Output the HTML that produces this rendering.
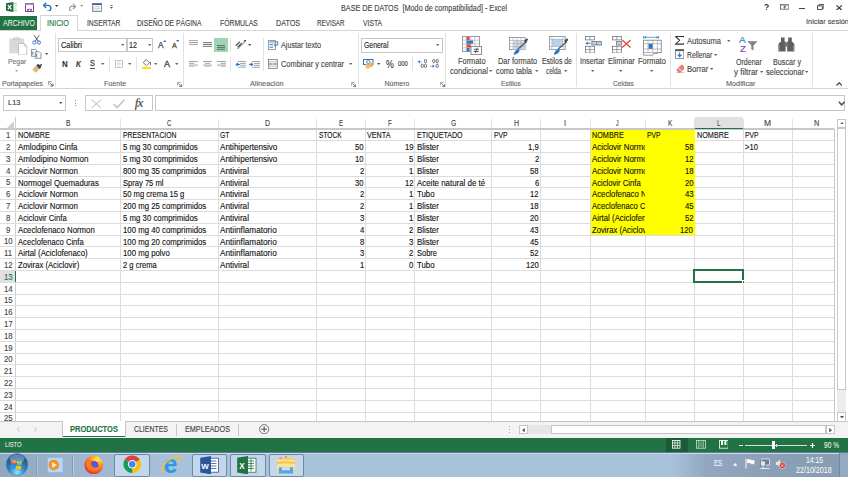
<!DOCTYPE html>
<html><head><meta charset="utf-8"><style>
html,body{margin:0;padding:0;width:848px;height:477px;overflow:hidden;background:#fff}
body{position:relative;font-family:"Liberation Sans",sans-serif}
div,svg{position:absolute}
</style></head><body>
<div style="left:0px;top:0px;width:848px;height:31px;background:#fff"></div>
<div style="left:340.5px;top:2.4px;line-height:12px;font-size:8.3px;color:#444;white-space:pre;transform:scaleX(0.871);transform-origin:0 50%;-webkit-text-stroke:0.12px #444;">BASE DE DATOS  [Modo de compatibilidad] - Excel</div>
<div style="left:0px;top:15.6px;width:36.6px;height:15.2px;background:#217346"></div>
<div style="left:2.6px;top:17.5px;line-height:12px;font-size:8.2px;color:#fff;white-space:pre;transform:scaleX(0.853);transform-origin:0 50%;">ARCHIVO</div>
<div style="left:0px;top:30.1px;width:848px;height:1px;background:#d5d5d5"></div>
<div style="left:39.6px;top:15.3px;width:38.1px;height:15.9px;background:#fff;border:1px solid #d5d5d5;border-bottom:none;box-sizing:border-box"></div>
<div style="left:47px;top:17.5px;line-height:12px;font-size:8.2px;color:#217346;white-space:pre;transform:scaleX(0.877);transform-origin:0 50%;-webkit-text-stroke:0.12px #217346;">INICIO</div>
<div style="left:86.6px;top:17.5px;line-height:12px;font-size:8.2px;color:#444;white-space:pre;transform:scaleX(0.821);transform-origin:0 50%;-webkit-text-stroke:0.12px #444;">INSERTAR</div>
<div style="left:137.2px;top:17.5px;line-height:12px;font-size:8.2px;color:#444;white-space:pre;transform:scaleX(0.824);transform-origin:0 50%;-webkit-text-stroke:0.12px #444;">DISEÑO DE PÁGINA</div>
<div style="left:220px;top:17.5px;line-height:12px;font-size:8.2px;color:#444;white-space:pre;transform:scaleX(0.833);transform-origin:0 50%;-webkit-text-stroke:0.12px #444;">FÓRMULAS</div>
<div style="left:275.8px;top:17.5px;line-height:12px;font-size:8.2px;color:#444;white-space:pre;transform:scaleX(0.877);transform-origin:0 50%;-webkit-text-stroke:0.12px #444;">DATOS</div>
<div style="left:317.4px;top:17.5px;line-height:12px;font-size:8.2px;color:#444;white-space:pre;transform:scaleX(0.767);transform-origin:0 50%;-webkit-text-stroke:0.12px #444;">REVISAR</div>
<div style="left:362.6px;top:17.5px;line-height:12px;font-size:8.2px;color:#444;white-space:pre;transform:scaleX(0.826);transform-origin:0 50%;-webkit-text-stroke:0.12px #444;">VISTA</div>
<div style="left:805.8px;top:15.9px;line-height:12px;font-size:8px;color:#444;white-space:pre;transform:scaleX(0.920);transform-origin:0 50%;-webkit-text-stroke:0.12px #444;">Iniciar sesión</div>
<div style="left:0px;top:87.8px;width:848px;height:1px;background:#d5d5d5"></div>
<div style="left:55.1px;top:33px;width:1px;height:54px;background:#e1e1e1"></div>
<div style="left:183.3px;top:33px;width:1px;height:54px;background:#e1e1e1"></div>
<div style="left:358px;top:33px;width:1px;height:54px;background:#e1e1e1"></div>
<div style="left:445.1px;top:33px;width:1px;height:54px;background:#e1e1e1"></div>
<div style="left:576px;top:33px;width:1px;height:54px;background:#e1e1e1"></div>
<div style="left:670.3px;top:33px;width:1px;height:54px;background:#e1e1e1"></div>
<div style="left:811.5px;top:33px;width:1px;height:54px;background:#e1e1e1"></div>
<div style="left:2px;top:77.5px;line-height:12px;font-size:7px;color:#666;white-space:pre;transform:scaleX(0.994);transform-origin:0 50%;-webkit-text-stroke:0.12px #666;">Portapapeles</div>
<div style="left:103.8px;top:77.5px;line-height:12px;font-size:7px;color:#666;white-space:pre;transform:scaleX(1.015);transform-origin:0 50%;-webkit-text-stroke:0.12px #666;">Fuente</div>
<div style="left:249.5px;top:77.5px;line-height:12px;font-size:7px;color:#666;white-space:pre;transform:scaleX(1.038);transform-origin:0 50%;-webkit-text-stroke:0.12px #666;">Alineación</div>
<div style="left:384.5px;top:77.5px;line-height:12px;font-size:7px;color:#666;white-space:pre;-webkit-text-stroke:0.12px #666;">Número</div>
<div style="left:500.8px;top:77.5px;line-height:12px;font-size:7px;color:#666;white-space:pre;transform:scaleX(0.969);transform-origin:0 50%;-webkit-text-stroke:0.12px #666;">Estilos</div>
<div style="left:613px;top:77.5px;line-height:12px;font-size:7px;color:#666;white-space:pre;transform:scaleX(0.955);transform-origin:0 50%;-webkit-text-stroke:0.12px #666;">Celdas</div>
<div style="left:726px;top:77.5px;line-height:12px;font-size:7px;color:#666;white-space:pre;transform:scaleX(1.038);transform-origin:0 50%;-webkit-text-stroke:0.12px #666;">Modificar</div>
<div style="left:7.8px;top:55.6px;line-height:12px;font-size:7px;color:#777;white-space:pre;transform:scaleX(0.974);transform-origin:0 50%;-webkit-text-stroke:0.12px #777;">Pegar</div>
<div style="left:58.1px;top:38.4px;width:69.3px;height:13.8px;border:1px solid #c6c6c6;box-sizing:border-box;background:#fff"></div>
<div style="left:126.9px;top:38.4px;width:26.6px;height:13.8px;border:1px solid #c6c6c6;box-sizing:border-box;background:#fff"></div>
<div style="left:60.5px;top:39.3px;line-height:12px;font-size:8.4px;color:#222;white-space:pre;transform:scaleX(0.883);transform-origin:0 50%;-webkit-text-stroke:0.12px #222;">Calibri</div>
<div style="left:129px;top:39.3px;line-height:12px;font-size:8.4px;color:#222;white-space:pre;transform:scaleX(0.858);transform-origin:0 50%;-webkit-text-stroke:0.12px #222;">12</div>
<svg style="left:120.75px;top:43.95px" width="3.5" height="2.1" viewBox="0 0 3.5 2.1"><path d="M0 0 L3.5 0 L1.75 1.93 Z" fill="#666"/></svg>
<svg style="left:147.55px;top:43.95px" width="3.5" height="2.1" viewBox="0 0 3.5 2.1"><path d="M0 0 L3.5 0 L1.75 1.93 Z" fill="#666"/></svg>
<div style="left:280.5px;top:39px;line-height:12px;font-size:8.3px;color:#444;white-space:pre;transform:scaleX(0.867);transform-origin:0 50%;-webkit-text-stroke:0.12px #444;">Ajustar texto</div>
<div style="left:280.5px;top:58px;line-height:12px;font-size:8.3px;color:#444;white-space:pre;transform:scaleX(0.893);transform-origin:0 50%;-webkit-text-stroke:0.12px #444;">Combinar y centrar</div>
<svg style="left:349.25px;top:62.95px" width="3.5" height="2.1" viewBox="0 0 3.5 2.1"><path d="M0 0 L3.5 0 L1.75 1.93 Z" fill="#666"/></svg>
<div style="left:361px;top:38px;width:81.6px;height:14.5px;border:1px solid #c6c6c6;box-sizing:border-box;background:#fff"></div>
<div style="left:363.5px;top:39.3px;line-height:12px;font-size:8.4px;color:#222;white-space:pre;transform:scaleX(0.819);transform-origin:0 50%;-webkit-text-stroke:0.12px #222;">General</div>
<svg style="left:435.75px;top:44.25px" width="3.5" height="2.1" viewBox="0 0 3.5 2.1"><path d="M0 0 L3.5 0 L1.75 1.93 Z" fill="#666"/></svg>
<div style="left:457.5px;top:55.3px;line-height:12px;font-size:8.3px;color:#444;white-space:pre;transform:scaleX(0.891);transform-origin:0 50%;-webkit-text-stroke:0.12px #444;">Formato</div>
<div style="left:449.8px;top:65.3px;line-height:12px;font-size:8.3px;color:#444;white-space:pre;transform:scaleX(0.911);transform-origin:0 50%;-webkit-text-stroke:0.12px #444;">condicional</div>
<svg style="left:489.05px;top:70.45px" width="3.5" height="2.1" viewBox="0 0 3.5 2.1"><path d="M0 0 L3.5 0 L1.75 1.93 Z" fill="#666"/></svg>
<div style="left:497.5px;top:55.3px;line-height:12px;font-size:8.3px;color:#444;white-space:pre;transform:scaleX(0.892);transform-origin:0 50%;-webkit-text-stroke:0.12px #444;">Dar formato</div>
<div style="left:496px;top:65.3px;line-height:12px;font-size:8.3px;color:#444;white-space:pre;transform:scaleX(0.885);transform-origin:0 50%;-webkit-text-stroke:0.12px #444;">como tabla</div>
<svg style="left:535.25px;top:70.45px" width="3.5" height="2.1" viewBox="0 0 3.5 2.1"><path d="M0 0 L3.5 0 L1.75 1.93 Z" fill="#666"/></svg>
<div style="left:541.5px;top:55.3px;line-height:12px;font-size:8.3px;color:#444;white-space:pre;transform:scaleX(0.833);transform-origin:0 50%;-webkit-text-stroke:0.12px #444;">Estilos de</div>
<div style="left:546px;top:65.3px;line-height:12px;font-size:8.3px;color:#444;white-space:pre;transform:scaleX(0.756);transform-origin:0 50%;-webkit-text-stroke:0.12px #444;">celda</div>
<svg style="left:564.25px;top:70.45px" width="3.5" height="2.1" viewBox="0 0 3.5 2.1"><path d="M0 0 L3.5 0 L1.75 1.93 Z" fill="#666"/></svg>
<div style="left:580.4px;top:55.3px;line-height:12px;font-size:8.3px;color:#444;white-space:pre;transform:scaleX(0.874);transform-origin:0 50%;-webkit-text-stroke:0.12px #444;">Insertar</div>
<svg style="left:590.75px;top:70.45px" width="3.5" height="2.1" viewBox="0 0 3.5 2.1"><path d="M0 0 L3.5 0 L1.75 1.93 Z" fill="#666"/></svg>
<div style="left:607.7px;top:55.3px;line-height:12px;font-size:8.3px;color:#444;white-space:pre;transform:scaleX(0.894);transform-origin:0 50%;-webkit-text-stroke:0.12px #444;">Eliminar</div>
<svg style="left:619.25px;top:70.45px" width="3.5" height="2.1" viewBox="0 0 3.5 2.1"><path d="M0 0 L3.5 0 L1.75 1.93 Z" fill="#666"/></svg>
<div style="left:637.5px;top:55.3px;line-height:12px;font-size:8.3px;color:#444;white-space:pre;transform:scaleX(0.900);transform-origin:0 50%;-webkit-text-stroke:0.12px #444;">Formato</div>
<svg style="left:649.75px;top:70.45px" width="3.5" height="2.1" viewBox="0 0 3.5 2.1"><path d="M0 0 L3.5 0 L1.75 1.93 Z" fill="#666"/></svg>
<div style="left:686.7px;top:34.7px;line-height:12px;font-size:8.3px;color:#444;white-space:pre;transform:scaleX(0.908);transform-origin:0 50%;-webkit-text-stroke:0.12px #444;">Autosuma</div>
<svg style="left:726.75px;top:39.65px" width="3.5" height="2.1" viewBox="0 0 3.5 2.1"><path d="M0 0 L3.5 0 L1.75 1.93 Z" fill="#666"/></svg>
<div style="left:686.7px;top:49px;line-height:12px;font-size:8.3px;color:#444;white-space:pre;transform:scaleX(0.819);transform-origin:0 50%;-webkit-text-stroke:0.12px #444;">Rellenar</div>
<svg style="left:714.25px;top:53.95px" width="3.5" height="2.1" viewBox="0 0 3.5 2.1"><path d="M0 0 L3.5 0 L1.75 1.93 Z" fill="#666"/></svg>
<div style="left:686.7px;top:62.8px;line-height:12px;font-size:8.3px;color:#444;white-space:pre;transform:scaleX(0.923);transform-origin:0 50%;-webkit-text-stroke:0.12px #444;">Borrar</div>
<svg style="left:709.85px;top:67.75px" width="3.5" height="2.1" viewBox="0 0 3.5 2.1"><path d="M0 0 L3.5 0 L1.75 1.93 Z" fill="#666"/></svg>
<div style="left:735.5px;top:55.5px;line-height:12px;font-size:8.3px;color:#444;white-space:pre;transform:scaleX(0.850);transform-origin:0 50%;-webkit-text-stroke:0.12px #444;">Ordenar</div>
<div style="left:734px;top:66px;line-height:12px;font-size:8.3px;color:#444;white-space:pre;transform:scaleX(0.964);transform-origin:0 50%;-webkit-text-stroke:0.12px #444;">y filtrar</div>
<svg style="left:759.75px;top:70.95px" width="3.5" height="2.1" viewBox="0 0 3.5 2.1"><path d="M0 0 L3.5 0 L1.75 1.93 Z" fill="#666"/></svg>
<div style="left:772.7px;top:55.5px;line-height:12px;font-size:8.3px;color:#444;white-space:pre;transform:scaleX(0.867);transform-origin:0 50%;-webkit-text-stroke:0.12px #444;">Buscar y</div>
<div style="left:765.7px;top:66px;line-height:12px;font-size:8.3px;color:#444;white-space:pre;transform:scaleX(0.910);transform-origin:0 50%;-webkit-text-stroke:0.12px #444;">seleccionar</div>
<svg style="left:804.75px;top:70.95px" width="3.5" height="2.1" viewBox="0 0 3.5 2.1"><path d="M0 0 L3.5 0 L1.75 1.93 Z" fill="#666"/></svg>
<div style="left:3px;top:95.3px;width:63px;height:15.7px;border:1px solid #c6c6c6;box-sizing:border-box;background:#fff"></div>
<div style="left:7.5px;top:97.4px;line-height:12px;font-size:7.6px;color:#333;white-space:pre;transform:scaleX(0.977);transform-origin:0 50%;-webkit-text-stroke:0.12px #333;">L13</div>
<svg style="left:58.65px;top:101.75px" width="3.5" height="2.1" viewBox="0 0 3.5 2.1"><path d="M0 0 L3.5 0 L1.75 1.93 Z" fill="#555"/></svg>
<div style="left:85px;top:95px;width:68px;height:16px;border:1px solid #c6c6c6;box-sizing:border-box;background:#fff"></div>
<div style="left:155.3px;top:95px;width:689.3px;height:16px;border:1px solid #c6c6c6;box-sizing:border-box;background:#fff"></div>
<div style="left:694.6px;top:117.4px;width:48.8px;height:11.5px;background:#e1e1e1"></div>
<div style="left:0px;top:270.5px;width:15.6px;height:11.8px;background:#e1e1e1"></div>
<div style="left:15.6px;top:140.2px;width:818.8px;height:1px;background:#dcdcdc"></div>
<div style="left:15.6px;top:152px;width:818.8px;height:1px;background:#dcdcdc"></div>
<div style="left:15.6px;top:163.8px;width:818.8px;height:1px;background:#dcdcdc"></div>
<div style="left:15.6px;top:175.6px;width:818.8px;height:1px;background:#dcdcdc"></div>
<div style="left:15.6px;top:187.4px;width:818.8px;height:1px;background:#dcdcdc"></div>
<div style="left:15.6px;top:199.2px;width:818.8px;height:1px;background:#dcdcdc"></div>
<div style="left:15.6px;top:211px;width:818.8px;height:1px;background:#dcdcdc"></div>
<div style="left:15.6px;top:222.8px;width:818.8px;height:1px;background:#dcdcdc"></div>
<div style="left:15.6px;top:234.6px;width:818.8px;height:1px;background:#dcdcdc"></div>
<div style="left:15.6px;top:246.4px;width:818.8px;height:1px;background:#dcdcdc"></div>
<div style="left:15.6px;top:258.2px;width:818.8px;height:1px;background:#dcdcdc"></div>
<div style="left:15.6px;top:270px;width:818.8px;height:1px;background:#dcdcdc"></div>
<div style="left:15.6px;top:281.8px;width:818.8px;height:1px;background:#dcdcdc"></div>
<div style="left:15.6px;top:293.6px;width:818.8px;height:1px;background:#dcdcdc"></div>
<div style="left:15.6px;top:305.4px;width:818.8px;height:1px;background:#dcdcdc"></div>
<div style="left:15.6px;top:317.2px;width:818.8px;height:1px;background:#dcdcdc"></div>
<div style="left:15.6px;top:329px;width:818.8px;height:1px;background:#dcdcdc"></div>
<div style="left:15.6px;top:340.8px;width:818.8px;height:1px;background:#dcdcdc"></div>
<div style="left:15.6px;top:352.6px;width:818.8px;height:1px;background:#dcdcdc"></div>
<div style="left:15.6px;top:364.4px;width:818.8px;height:1px;background:#dcdcdc"></div>
<div style="left:15.6px;top:376.2px;width:818.8px;height:1px;background:#dcdcdc"></div>
<div style="left:15.6px;top:388px;width:818.8px;height:1px;background:#dcdcdc"></div>
<div style="left:15.6px;top:399.8px;width:818.8px;height:1px;background:#dcdcdc"></div>
<div style="left:15.6px;top:411.6px;width:818.8px;height:1px;background:#dcdcdc"></div>
<div style="left:120px;top:128.9px;width:1px;height:292.4px;background:#dcdcdc"></div>
<div style="left:120px;top:118.9px;width:1px;height:10px;background:#e2e2e2"></div>
<div style="left:217.9px;top:128.9px;width:1px;height:292.4px;background:#dcdcdc"></div>
<div style="left:217.9px;top:118.9px;width:1px;height:10px;background:#e2e2e2"></div>
<div style="left:316.3px;top:128.9px;width:1px;height:292.4px;background:#dcdcdc"></div>
<div style="left:316.3px;top:118.9px;width:1px;height:10px;background:#e2e2e2"></div>
<div style="left:364.8px;top:128.9px;width:1px;height:292.4px;background:#dcdcdc"></div>
<div style="left:364.8px;top:118.9px;width:1px;height:10px;background:#e2e2e2"></div>
<div style="left:414.1px;top:128.9px;width:1px;height:292.4px;background:#dcdcdc"></div>
<div style="left:414.1px;top:118.9px;width:1px;height:10px;background:#e2e2e2"></div>
<div style="left:491.3px;top:128.9px;width:1px;height:292.4px;background:#dcdcdc"></div>
<div style="left:491.3px;top:118.9px;width:1px;height:10px;background:#e2e2e2"></div>
<div style="left:539.9px;top:128.9px;width:1px;height:292.4px;background:#dcdcdc"></div>
<div style="left:539.9px;top:118.9px;width:1px;height:10px;background:#e2e2e2"></div>
<div style="left:589.7px;top:128.9px;width:1px;height:292.4px;background:#dcdcdc"></div>
<div style="left:589.7px;top:118.9px;width:1px;height:10px;background:#e2e2e2"></div>
<div style="left:644.8px;top:128.9px;width:1px;height:292.4px;background:#dcdcdc"></div>
<div style="left:644.8px;top:118.9px;width:1px;height:10px;background:#e2e2e2"></div>
<div style="left:694.1px;top:128.9px;width:1px;height:292.4px;background:#dcdcdc"></div>
<div style="left:694.1px;top:118.9px;width:1px;height:10px;background:#e2e2e2"></div>
<div style="left:742.9px;top:128.9px;width:1px;height:292.4px;background:#dcdcdc"></div>
<div style="left:742.9px;top:118.9px;width:1px;height:10px;background:#e2e2e2"></div>
<div style="left:791.9px;top:128.9px;width:1px;height:292.4px;background:#dcdcdc"></div>
<div style="left:791.9px;top:118.9px;width:1px;height:10px;background:#e2e2e2"></div>
<div style="left:590.5px;top:129.3px;width:104px;height:106.2px;background:#ffff00"></div>
<div style="left:0px;top:128.25px;width:834.4px;height:1.3px;background:#c8c8c8"></div>
<div style="left:15.1px;top:117.4px;width:1px;height:303.9px;background:#cfcfcf"></div>
<div style="left:833.9px;top:128.9px;width:1px;height:292.4px;background:#c6c6c6"></div>
<div style="left:0px;top:140.2px;width:15.6px;height:1px;background:#dcdcdc"></div>
<div style="left:0px;top:152px;width:15.6px;height:1px;background:#dcdcdc"></div>
<div style="left:0px;top:163.8px;width:15.6px;height:1px;background:#dcdcdc"></div>
<div style="left:0px;top:175.6px;width:15.6px;height:1px;background:#dcdcdc"></div>
<div style="left:0px;top:187.4px;width:15.6px;height:1px;background:#dcdcdc"></div>
<div style="left:0px;top:199.2px;width:15.6px;height:1px;background:#dcdcdc"></div>
<div style="left:0px;top:211px;width:15.6px;height:1px;background:#dcdcdc"></div>
<div style="left:0px;top:222.8px;width:15.6px;height:1px;background:#dcdcdc"></div>
<div style="left:0px;top:234.6px;width:15.6px;height:1px;background:#dcdcdc"></div>
<div style="left:0px;top:246.4px;width:15.6px;height:1px;background:#dcdcdc"></div>
<div style="left:0px;top:258.2px;width:15.6px;height:1px;background:#dcdcdc"></div>
<div style="left:0px;top:270px;width:15.6px;height:1px;background:#dcdcdc"></div>
<div style="left:0px;top:281.8px;width:15.6px;height:1px;background:#dcdcdc"></div>
<div style="left:0px;top:293.6px;width:15.6px;height:1px;background:#dcdcdc"></div>
<div style="left:0px;top:305.4px;width:15.6px;height:1px;background:#dcdcdc"></div>
<div style="left:0px;top:317.2px;width:15.6px;height:1px;background:#dcdcdc"></div>
<div style="left:0px;top:329px;width:15.6px;height:1px;background:#dcdcdc"></div>
<div style="left:0px;top:340.8px;width:15.6px;height:1px;background:#dcdcdc"></div>
<div style="left:0px;top:352.6px;width:15.6px;height:1px;background:#dcdcdc"></div>
<div style="left:0px;top:364.4px;width:15.6px;height:1px;background:#dcdcdc"></div>
<div style="left:0px;top:376.2px;width:15.6px;height:1px;background:#dcdcdc"></div>
<div style="left:0px;top:388px;width:15.6px;height:1px;background:#dcdcdc"></div>
<div style="left:0px;top:399.8px;width:15.6px;height:1px;background:#dcdcdc"></div>
<div style="left:0px;top:411.6px;width:15.6px;height:1px;background:#dcdcdc"></div>
<div style="left:694.6px;top:127.55px;width:48.8px;height:1.5px;background:#217346"></div>
<div style="left:14.55px;top:270.5px;width:1.5px;height:11.8px;background:#217346"></div>
<div style="left:65.8px;top:117.3px;line-height:12px;font-size:8.6px;color:#444;white-space:pre;transform:scaleX(0.782);transform-origin:0 50%;-webkit-text-stroke:0.12px #444;">B</div>
<div style="left:167.26px;top:117.3px;line-height:12px;font-size:8.6px;color:#444;white-space:pre;transform:scaleX(0.708);transform-origin:0 50%;-webkit-text-stroke:0.12px #444;">C</div>
<div style="left:265.07px;top:117.3px;line-height:12px;font-size:8.6px;color:#444;white-space:pre;transform:scaleX(0.817);transform-origin:0 50%;-webkit-text-stroke:0.12px #444;">D</div>
<div style="left:339.03px;top:117.3px;line-height:12px;font-size:8.6px;color:#444;white-space:pre;transform:scaleX(0.702);transform-origin:0 50%;-webkit-text-stroke:0.12px #444;">E</div>
<div style="left:388.06px;top:117.3px;line-height:12px;font-size:8.6px;color:#444;white-space:pre;transform:scaleX(0.722);transform-origin:0 50%;-webkit-text-stroke:0.12px #444;">F</div>
<div style="left:450.59px;top:117.3px;line-height:12px;font-size:8.6px;color:#444;white-space:pre;transform:scaleX(0.778);transform-origin:0 50%;-webkit-text-stroke:0.12px #444;">G</div>
<div style="left:513.54px;top:117.3px;line-height:12px;font-size:8.6px;color:#444;white-space:pre;transform:scaleX(0.828);transform-origin:0 50%;-webkit-text-stroke:0.12px #444;">H</div>
<div style="left:564.25px;top:117.3px;line-height:12px;font-size:8.6px;color:#444;white-space:pre;transform:scaleX(0.870);transform-origin:0 50%;-webkit-text-stroke:0.12px #444;">I</div>
<div style="left:616.43px;top:117.3px;line-height:12px;font-size:8.6px;color:#444;white-space:pre;transform:scaleX(0.612);transform-origin:0 50%;-webkit-text-stroke:0.12px #444;">J</div>
<div style="left:667.8px;top:117.3px;line-height:12px;font-size:8.6px;color:#444;white-space:pre;transform:scaleX(0.747);transform-origin:0 50%;-webkit-text-stroke:0.12px #444;">K</div>
<div style="left:717.25px;top:117.3px;line-height:12px;font-size:8.6px;color:#217346;white-space:pre;transform:scaleX(0.725);transform-origin:0 50%;-webkit-text-stroke:0.12px #217346;">L</div>
<div style="left:764.39px;top:117.3px;line-height:12px;font-size:8.6px;color:#444;white-space:pre;transform:scaleX(0.985);transform-origin:0 50%;-webkit-text-stroke:0.12px #444;">M</div>
<div style="left:814.35px;top:117.3px;line-height:12px;font-size:8.6px;color:#444;white-space:pre;transform:scaleX(0.857);transform-origin:0 50%;-webkit-text-stroke:0.12px #444;">N</div>
<svg style="left:7px;top:120.5px" width="7" height="7" viewBox="0 0 7 7"><path d="M7 0 L7 7 L0 7 Z" fill="#d0d0d0"/></svg>
<div style="left:6.01px;top:129.2px;line-height:12px;font-size:8.6px;color:#444;white-space:pre;transform:scaleX(0.910);transform-origin:0 50%;-webkit-text-stroke:0.12px #444;">1</div>
<div style="left:6.01px;top:141px;line-height:12px;font-size:8.6px;color:#444;white-space:pre;transform:scaleX(0.910);transform-origin:0 50%;-webkit-text-stroke:0.12px #444;">2</div>
<div style="left:6.01px;top:152.8px;line-height:12px;font-size:8.6px;color:#444;white-space:pre;transform:scaleX(0.910);transform-origin:0 50%;-webkit-text-stroke:0.12px #444;">3</div>
<div style="left:6.01px;top:164.6px;line-height:12px;font-size:8.6px;color:#444;white-space:pre;transform:scaleX(0.910);transform-origin:0 50%;-webkit-text-stroke:0.12px #444;">4</div>
<div style="left:6.01px;top:176.4px;line-height:12px;font-size:8.6px;color:#444;white-space:pre;transform:scaleX(0.910);transform-origin:0 50%;-webkit-text-stroke:0.12px #444;">5</div>
<div style="left:6.01px;top:188.2px;line-height:12px;font-size:8.6px;color:#444;white-space:pre;transform:scaleX(0.910);transform-origin:0 50%;-webkit-text-stroke:0.12px #444;">6</div>
<div style="left:6.01px;top:200px;line-height:12px;font-size:8.6px;color:#444;white-space:pre;transform:scaleX(0.910);transform-origin:0 50%;-webkit-text-stroke:0.12px #444;">7</div>
<div style="left:6.01px;top:211.8px;line-height:12px;font-size:8.6px;color:#444;white-space:pre;transform:scaleX(0.910);transform-origin:0 50%;-webkit-text-stroke:0.12px #444;">8</div>
<div style="left:6.01px;top:223.6px;line-height:12px;font-size:8.6px;color:#444;white-space:pre;transform:scaleX(0.910);transform-origin:0 50%;-webkit-text-stroke:0.12px #444;">9</div>
<div style="left:3.86px;top:235.4px;line-height:12px;font-size:8.6px;color:#444;white-space:pre;transform:scaleX(0.910);transform-origin:0 50%;-webkit-text-stroke:0.12px #444;">10</div>
<div style="left:4.13px;top:247.2px;line-height:12px;font-size:8.6px;color:#444;white-space:pre;transform:scaleX(0.910);transform-origin:0 50%;-webkit-text-stroke:0.12px #444;">11</div>
<div style="left:3.86px;top:259px;line-height:12px;font-size:8.6px;color:#444;white-space:pre;transform:scaleX(0.910);transform-origin:0 50%;-webkit-text-stroke:0.12px #444;">12</div>
<div style="left:3.86px;top:270.8px;line-height:12px;font-size:8.6px;color:#217346;white-space:pre;transform:scaleX(0.910);transform-origin:0 50%;-webkit-text-stroke:0.12px #217346;">13</div>
<div style="left:3.86px;top:282.6px;line-height:12px;font-size:8.6px;color:#444;white-space:pre;transform:scaleX(0.910);transform-origin:0 50%;-webkit-text-stroke:0.12px #444;">14</div>
<div style="left:3.86px;top:294.4px;line-height:12px;font-size:8.6px;color:#444;white-space:pre;transform:scaleX(0.910);transform-origin:0 50%;-webkit-text-stroke:0.12px #444;">15</div>
<div style="left:3.86px;top:306.2px;line-height:12px;font-size:8.6px;color:#444;white-space:pre;transform:scaleX(0.910);transform-origin:0 50%;-webkit-text-stroke:0.12px #444;">16</div>
<div style="left:3.86px;top:318px;line-height:12px;font-size:8.6px;color:#444;white-space:pre;transform:scaleX(0.910);transform-origin:0 50%;-webkit-text-stroke:0.12px #444;">17</div>
<div style="left:3.86px;top:329.8px;line-height:12px;font-size:8.6px;color:#444;white-space:pre;transform:scaleX(0.910);transform-origin:0 50%;-webkit-text-stroke:0.12px #444;">18</div>
<div style="left:3.86px;top:341.6px;line-height:12px;font-size:8.6px;color:#444;white-space:pre;transform:scaleX(0.910);transform-origin:0 50%;-webkit-text-stroke:0.12px #444;">19</div>
<div style="left:3.86px;top:353.4px;line-height:12px;font-size:8.6px;color:#444;white-space:pre;transform:scaleX(0.910);transform-origin:0 50%;-webkit-text-stroke:0.12px #444;">20</div>
<div style="left:3.86px;top:365.2px;line-height:12px;font-size:8.6px;color:#444;white-space:pre;transform:scaleX(0.910);transform-origin:0 50%;-webkit-text-stroke:0.12px #444;">21</div>
<div style="left:3.86px;top:377px;line-height:12px;font-size:8.6px;color:#444;white-space:pre;transform:scaleX(0.910);transform-origin:0 50%;-webkit-text-stroke:0.12px #444;">22</div>
<div style="left:3.86px;top:388.8px;line-height:12px;font-size:8.6px;color:#444;white-space:pre;transform:scaleX(0.910);transform-origin:0 50%;-webkit-text-stroke:0.12px #444;">23</div>
<div style="left:3.86px;top:400.6px;line-height:12px;font-size:8.6px;color:#444;white-space:pre;transform:scaleX(0.910);transform-origin:0 50%;-webkit-text-stroke:0.12px #444;">24</div>
<div style="left:3.86px;top:412.4px;line-height:12px;font-size:8.6px;color:#444;white-space:pre;transform:scaleX(0.910);transform-origin:0 50%;-webkit-text-stroke:0.12px #444;">25</div>
<div style="left:16.6px;top:128.9px;width:103.4px;height:11.8px;overflow:hidden"><div style="left:1.0px;top:0.5px;line-height:12px;font-size:8.6px;color:#111;white-space:pre;-webkit-text-stroke:0.12px #111;transform:scaleX(0.842);transform-origin:0 50%;">NOMBRE</div></div>
<div style="left:121.5px;top:128.9px;width:96.4px;height:11.8px;overflow:hidden"><div style="left:1.0px;top:0.5px;line-height:12px;font-size:8.6px;color:#111;white-space:pre;-webkit-text-stroke:0.12px #111;transform:scaleX(0.797);transform-origin:0 50%;">PRESENTACION</div></div>
<div style="left:219.4px;top:128.9px;width:96.9px;height:11.8px;overflow:hidden"><div style="left:1.0px;top:0.5px;line-height:12px;font-size:8.6px;color:#111;white-space:pre;-webkit-text-stroke:0.12px #111;transform:scaleX(0.796);transform-origin:0 50%;">GT</div></div>
<div style="left:317.8px;top:128.9px;width:47px;height:11.8px;overflow:hidden"><div style="left:1.0px;top:0.5px;line-height:12px;font-size:8.6px;color:#111;white-space:pre;-webkit-text-stroke:0.12px #111;transform:scaleX(0.768);transform-origin:0 50%;">STOCK</div></div>
<div style="left:366.3px;top:128.9px;width:47.8px;height:11.8px;overflow:hidden"><div style="left:1.0px;top:0.5px;line-height:12px;font-size:8.6px;color:#111;white-space:pre;-webkit-text-stroke:0.12px #111;transform:scaleX(0.839);transform-origin:0 50%;">VENTA</div></div>
<div style="left:415.6px;top:128.9px;width:75.7px;height:11.8px;overflow:hidden"><div style="left:1.0px;top:0.5px;line-height:12px;font-size:8.6px;color:#111;white-space:pre;-webkit-text-stroke:0.12px #111;transform:scaleX(0.826);transform-origin:0 50%;">ETIQUETADO</div></div>
<div style="left:492.8px;top:128.9px;width:47.1px;height:11.8px;overflow:hidden"><div style="left:1.0px;top:0.5px;line-height:12px;font-size:8.6px;color:#111;white-space:pre;-webkit-text-stroke:0.12px #111;transform:scaleX(0.791);transform-origin:0 50%;">PVP</div></div>
<div style="left:591.2px;top:128.9px;width:53.6px;height:11.8px;overflow:hidden"><div style="left:1.0px;top:0.5px;line-height:12px;font-size:8.6px;color:#111;white-space:pre;-webkit-text-stroke:0.12px #111;transform:scaleX(0.842);transform-origin:0 50%;">NOMBRE</div></div>
<div style="left:646.3px;top:128.9px;width:47.8px;height:11.8px;overflow:hidden"><div style="left:1.0px;top:0.5px;line-height:12px;font-size:8.6px;color:#111;white-space:pre;-webkit-text-stroke:0.12px #111;transform:scaleX(0.791);transform-origin:0 50%;">PVP</div></div>
<div style="left:695.6px;top:128.9px;width:47.3px;height:11.8px;overflow:hidden"><div style="left:1.0px;top:0.5px;line-height:12px;font-size:8.6px;color:#111;white-space:pre;-webkit-text-stroke:0.12px #111;transform:scaleX(0.842);transform-origin:0 50%;">NOMBRE</div></div>
<div style="left:744.4px;top:128.9px;width:47.5px;height:11.8px;overflow:hidden"><div style="left:1.0px;top:0.5px;line-height:12px;font-size:8.6px;color:#111;white-space:pre;-webkit-text-stroke:0.12px #111;transform:scaleX(0.791);transform-origin:0 50%;">PVP</div></div>
<div style="left:16.6px;top:140.7px;width:103.4px;height:11.8px;overflow:hidden"><div style="left:1.0px;top:0.5px;line-height:12px;font-size:8.6px;color:#111;white-space:pre;-webkit-text-stroke:0.12px #111;transform:scaleX(0.915);transform-origin:0 50%;">Amlodipino Cinfa</div></div>
<div style="left:121.5px;top:140.7px;width:96.4px;height:11.8px;overflow:hidden"><div style="left:1.0px;top:0.5px;line-height:12px;font-size:8.6px;color:#111;white-space:pre;-webkit-text-stroke:0.12px #111;transform:scaleX(0.909);transform-origin:0 50%;">5 mg 30 comprimidos</div></div>
<div style="left:219.4px;top:140.7px;width:96.9px;height:11.8px;overflow:hidden"><div style="left:1.0px;top:0.5px;line-height:12px;font-size:8.6px;color:#111;white-space:pre;-webkit-text-stroke:0.12px #111;transform:scaleX(0.938);transform-origin:0 50%;">Antihipertensivo</div></div>
<div style="left:355.28px;top:141.2px;line-height:12px;font-size:8.6px;color:#111;white-space:pre;-webkit-text-stroke:0.12px #111;transform:scaleX(0.901);transform-origin:0 50%;">50</div>
<div style="left:404.58px;top:141.2px;line-height:12px;font-size:8.6px;color:#111;white-space:pre;-webkit-text-stroke:0.12px #111;transform:scaleX(0.901);transform-origin:0 50%;">19</div>
<div style="left:415.6px;top:140.7px;width:75.7px;height:11.8px;overflow:hidden"><div style="left:1.0px;top:0.5px;line-height:12px;font-size:8.6px;color:#111;white-space:pre;-webkit-text-stroke:0.12px #111;transform:scaleX(0.916);transform-origin:0 50%;">Blister</div></div>
<div style="left:528.26px;top:141.2px;line-height:12px;font-size:8.6px;color:#111;white-space:pre;-webkit-text-stroke:0.12px #111;transform:scaleX(0.898);transform-origin:0 50%;">1,9</div>
<div style="left:591.2px;top:140.7px;width:53.6px;height:11.8px;overflow:hidden"><div style="left:1.0px;top:0.5px;line-height:12px;font-size:8.6px;color:#111;white-space:pre;-webkit-text-stroke:0.12px #111;transform:scaleX(0.921);transform-origin:0 50%;">Aciclovir Normon</div></div>
<div style="left:684.58px;top:141.2px;line-height:12px;font-size:8.6px;color:#111;white-space:pre;-webkit-text-stroke:0.12px #111;transform:scaleX(0.901);transform-origin:0 50%;">58</div>
<div style="left:744.4px;top:140.7px;width:47.5px;height:11.8px;overflow:hidden"><div style="left:1.0px;top:0.5px;line-height:12px;font-size:8.6px;color:#111;white-space:pre;-webkit-text-stroke:0.12px #111;transform:scaleX(0.886);transform-origin:0 50%;">>10</div></div>
<div style="left:16.6px;top:152.5px;width:103.4px;height:11.8px;overflow:hidden"><div style="left:1.0px;top:0.5px;line-height:12px;font-size:8.6px;color:#111;white-space:pre;-webkit-text-stroke:0.12px #111;transform:scaleX(0.934);transform-origin:0 50%;">Amlodipino Normon</div></div>
<div style="left:121.5px;top:152.5px;width:96.4px;height:11.8px;overflow:hidden"><div style="left:1.0px;top:0.5px;line-height:12px;font-size:8.6px;color:#111;white-space:pre;-webkit-text-stroke:0.12px #111;transform:scaleX(0.909);transform-origin:0 50%;">5 mg 30 comprimidos</div></div>
<div style="left:219.4px;top:152.5px;width:96.9px;height:11.8px;overflow:hidden"><div style="left:1.0px;top:0.5px;line-height:12px;font-size:8.6px;color:#111;white-space:pre;-webkit-text-stroke:0.12px #111;transform:scaleX(0.938);transform-origin:0 50%;">Antihipertensivo</div></div>
<div style="left:355.28px;top:153px;line-height:12px;font-size:8.6px;color:#111;white-space:pre;-webkit-text-stroke:0.12px #111;transform:scaleX(0.901);transform-origin:0 50%;">10</div>
<div style="left:408.89px;top:153px;line-height:12px;font-size:8.6px;color:#111;white-space:pre;-webkit-text-stroke:0.12px #111;transform:scaleX(0.901);transform-origin:0 50%;">5</div>
<div style="left:415.6px;top:152.5px;width:75.7px;height:11.8px;overflow:hidden"><div style="left:1.0px;top:0.5px;line-height:12px;font-size:8.6px;color:#111;white-space:pre;-webkit-text-stroke:0.12px #111;transform:scaleX(0.916);transform-origin:0 50%;">Blister</div></div>
<div style="left:534.69px;top:153px;line-height:12px;font-size:8.6px;color:#111;white-space:pre;-webkit-text-stroke:0.12px #111;transform:scaleX(0.901);transform-origin:0 50%;">2</div>
<div style="left:591.2px;top:152.5px;width:53.6px;height:11.8px;overflow:hidden"><div style="left:1.0px;top:0.5px;line-height:12px;font-size:8.6px;color:#111;white-space:pre;-webkit-text-stroke:0.12px #111;transform:scaleX(0.921);transform-origin:0 50%;">Aciclovir Normon</div></div>
<div style="left:684.58px;top:153px;line-height:12px;font-size:8.6px;color:#111;white-space:pre;-webkit-text-stroke:0.12px #111;transform:scaleX(0.901);transform-origin:0 50%;">12</div>
<div style="left:16.6px;top:164.3px;width:103.4px;height:11.8px;overflow:hidden"><div style="left:1.0px;top:0.5px;line-height:12px;font-size:8.6px;color:#111;white-space:pre;-webkit-text-stroke:0.12px #111;transform:scaleX(0.921);transform-origin:0 50%;">Aciclovir Normon</div></div>
<div style="left:121.5px;top:164.3px;width:96.4px;height:11.8px;overflow:hidden"><div style="left:1.0px;top:0.5px;line-height:12px;font-size:8.6px;color:#111;white-space:pre;-webkit-text-stroke:0.12px #111;transform:scaleX(0.908);transform-origin:0 50%;">800 mg 35 comprimidos</div></div>
<div style="left:219.4px;top:164.3px;width:96.9px;height:11.8px;overflow:hidden"><div style="left:1.0px;top:0.5px;line-height:12px;font-size:8.6px;color:#111;white-space:pre;-webkit-text-stroke:0.12px #111;transform:scaleX(0.947);transform-origin:0 50%;">Antiviral</div></div>
<div style="left:359.59px;top:164.8px;line-height:12px;font-size:8.6px;color:#111;white-space:pre;-webkit-text-stroke:0.12px #111;transform:scaleX(0.901);transform-origin:0 50%;">2</div>
<div style="left:408.89px;top:164.8px;line-height:12px;font-size:8.6px;color:#111;white-space:pre;-webkit-text-stroke:0.12px #111;transform:scaleX(0.901);transform-origin:0 50%;">1</div>
<div style="left:415.6px;top:164.3px;width:75.7px;height:11.8px;overflow:hidden"><div style="left:1.0px;top:0.5px;line-height:12px;font-size:8.6px;color:#111;white-space:pre;-webkit-text-stroke:0.12px #111;transform:scaleX(0.916);transform-origin:0 50%;">Blister</div></div>
<div style="left:530.38px;top:164.8px;line-height:12px;font-size:8.6px;color:#111;white-space:pre;-webkit-text-stroke:0.12px #111;transform:scaleX(0.901);transform-origin:0 50%;">58</div>
<div style="left:591.2px;top:164.3px;width:53.6px;height:11.8px;overflow:hidden"><div style="left:1.0px;top:0.5px;line-height:12px;font-size:8.6px;color:#111;white-space:pre;-webkit-text-stroke:0.12px #111;transform:scaleX(0.921);transform-origin:0 50%;">Aciclovir Normon</div></div>
<div style="left:684.58px;top:164.8px;line-height:12px;font-size:8.6px;color:#111;white-space:pre;-webkit-text-stroke:0.12px #111;transform:scaleX(0.901);transform-origin:0 50%;">18</div>
<div style="left:16.6px;top:176.1px;width:103.4px;height:11.8px;overflow:hidden"><div style="left:1.0px;top:0.5px;line-height:12px;font-size:8.6px;color:#111;white-space:pre;-webkit-text-stroke:0.12px #111;transform:scaleX(0.905);transform-origin:0 50%;">Normogel Quemaduras</div></div>
<div style="left:121.5px;top:176.1px;width:96.4px;height:11.8px;overflow:hidden"><div style="left:1.0px;top:0.5px;line-height:12px;font-size:8.6px;color:#111;white-space:pre;-webkit-text-stroke:0.12px #111;transform:scaleX(0.882);transform-origin:0 50%;">Spray 75 ml</div></div>
<div style="left:219.4px;top:176.1px;width:96.9px;height:11.8px;overflow:hidden"><div style="left:1.0px;top:0.5px;line-height:12px;font-size:8.6px;color:#111;white-space:pre;-webkit-text-stroke:0.12px #111;transform:scaleX(0.947);transform-origin:0 50%;">Antiviral</div></div>
<div style="left:355.28px;top:176.6px;line-height:12px;font-size:8.6px;color:#111;white-space:pre;-webkit-text-stroke:0.12px #111;transform:scaleX(0.901);transform-origin:0 50%;">30</div>
<div style="left:404.58px;top:176.6px;line-height:12px;font-size:8.6px;color:#111;white-space:pre;-webkit-text-stroke:0.12px #111;transform:scaleX(0.901);transform-origin:0 50%;">12</div>
<div style="left:415.6px;top:176.1px;width:75.7px;height:11.8px;overflow:hidden"><div style="left:1.0px;top:0.5px;line-height:12px;font-size:8.6px;color:#111;white-space:pre;-webkit-text-stroke:0.12px #111;transform:scaleX(0.920);transform-origin:0 50%;">Aceite natural de té</div></div>
<div style="left:534.69px;top:176.6px;line-height:12px;font-size:8.6px;color:#111;white-space:pre;-webkit-text-stroke:0.12px #111;transform:scaleX(0.901);transform-origin:0 50%;">6</div>
<div style="left:591.2px;top:176.1px;width:53.6px;height:11.8px;overflow:hidden"><div style="left:1.0px;top:0.5px;line-height:12px;font-size:8.6px;color:#111;white-space:pre;-webkit-text-stroke:0.12px #111;transform:scaleX(0.895);transform-origin:0 50%;">Aciclovir Cinfa</div></div>
<div style="left:684.58px;top:176.6px;line-height:12px;font-size:8.6px;color:#111;white-space:pre;-webkit-text-stroke:0.12px #111;transform:scaleX(0.901);transform-origin:0 50%;">20</div>
<div style="left:16.6px;top:187.9px;width:103.4px;height:11.8px;overflow:hidden"><div style="left:1.0px;top:0.5px;line-height:12px;font-size:8.6px;color:#111;white-space:pre;-webkit-text-stroke:0.12px #111;transform:scaleX(0.921);transform-origin:0 50%;">Aciclovir Normon</div></div>
<div style="left:121.5px;top:187.9px;width:96.4px;height:11.8px;overflow:hidden"><div style="left:1.0px;top:0.5px;line-height:12px;font-size:8.6px;color:#111;white-space:pre;-webkit-text-stroke:0.12px #111;transform:scaleX(0.885);transform-origin:0 50%;">50 mg crema 15 g</div></div>
<div style="left:219.4px;top:187.9px;width:96.9px;height:11.8px;overflow:hidden"><div style="left:1.0px;top:0.5px;line-height:12px;font-size:8.6px;color:#111;white-space:pre;-webkit-text-stroke:0.12px #111;transform:scaleX(0.947);transform-origin:0 50%;">Antiviral</div></div>
<div style="left:359.59px;top:188.4px;line-height:12px;font-size:8.6px;color:#111;white-space:pre;-webkit-text-stroke:0.12px #111;transform:scaleX(0.901);transform-origin:0 50%;">2</div>
<div style="left:408.89px;top:188.4px;line-height:12px;font-size:8.6px;color:#111;white-space:pre;-webkit-text-stroke:0.12px #111;transform:scaleX(0.901);transform-origin:0 50%;">1</div>
<div style="left:415.6px;top:187.9px;width:75.7px;height:11.8px;overflow:hidden"><div style="left:1.0px;top:0.5px;line-height:12px;font-size:8.6px;color:#111;white-space:pre;-webkit-text-stroke:0.12px #111;transform:scaleX(0.911);transform-origin:0 50%;">Tubo</div></div>
<div style="left:530.38px;top:188.4px;line-height:12px;font-size:8.6px;color:#111;white-space:pre;-webkit-text-stroke:0.12px #111;transform:scaleX(0.901);transform-origin:0 50%;">12</div>
<div style="left:591.2px;top:187.9px;width:53.6px;height:11.8px;overflow:hidden"><div style="left:1.0px;top:0.5px;line-height:12px;font-size:8.6px;color:#111;white-space:pre;-webkit-text-stroke:0.12px #111;transform:scaleX(0.908);transform-origin:0 50%;">Aceclofenaco Normon</div></div>
<div style="left:684.58px;top:188.4px;line-height:12px;font-size:8.6px;color:#111;white-space:pre;-webkit-text-stroke:0.12px #111;transform:scaleX(0.901);transform-origin:0 50%;">43</div>
<div style="left:16.6px;top:199.7px;width:103.4px;height:11.8px;overflow:hidden"><div style="left:1.0px;top:0.5px;line-height:12px;font-size:8.6px;color:#111;white-space:pre;-webkit-text-stroke:0.12px #111;transform:scaleX(0.921);transform-origin:0 50%;">Aciclovir Normon</div></div>
<div style="left:121.5px;top:199.7px;width:96.4px;height:11.8px;overflow:hidden"><div style="left:1.0px;top:0.5px;line-height:12px;font-size:8.6px;color:#111;white-space:pre;-webkit-text-stroke:0.12px #111;transform:scaleX(0.908);transform-origin:0 50%;">200 mg 25 comprimidos</div></div>
<div style="left:219.4px;top:199.7px;width:96.9px;height:11.8px;overflow:hidden"><div style="left:1.0px;top:0.5px;line-height:12px;font-size:8.6px;color:#111;white-space:pre;-webkit-text-stroke:0.12px #111;transform:scaleX(0.947);transform-origin:0 50%;">Antiviral</div></div>
<div style="left:359.59px;top:200.2px;line-height:12px;font-size:8.6px;color:#111;white-space:pre;-webkit-text-stroke:0.12px #111;transform:scaleX(0.901);transform-origin:0 50%;">2</div>
<div style="left:408.89px;top:200.2px;line-height:12px;font-size:8.6px;color:#111;white-space:pre;-webkit-text-stroke:0.12px #111;transform:scaleX(0.901);transform-origin:0 50%;">1</div>
<div style="left:415.6px;top:199.7px;width:75.7px;height:11.8px;overflow:hidden"><div style="left:1.0px;top:0.5px;line-height:12px;font-size:8.6px;color:#111;white-space:pre;-webkit-text-stroke:0.12px #111;transform:scaleX(0.916);transform-origin:0 50%;">Blister</div></div>
<div style="left:530.38px;top:200.2px;line-height:12px;font-size:8.6px;color:#111;white-space:pre;-webkit-text-stroke:0.12px #111;transform:scaleX(0.901);transform-origin:0 50%;">18</div>
<div style="left:591.2px;top:199.7px;width:53.6px;height:11.8px;overflow:hidden"><div style="left:1.0px;top:0.5px;line-height:12px;font-size:8.6px;color:#111;white-space:pre;-webkit-text-stroke:0.12px #111;transform:scaleX(0.887);transform-origin:0 50%;">Aceclofenaco Cinfa</div></div>
<div style="left:684.58px;top:200.2px;line-height:12px;font-size:8.6px;color:#111;white-space:pre;-webkit-text-stroke:0.12px #111;transform:scaleX(0.901);transform-origin:0 50%;">45</div>
<div style="left:16.6px;top:211.5px;width:103.4px;height:11.8px;overflow:hidden"><div style="left:1.0px;top:0.5px;line-height:12px;font-size:8.6px;color:#111;white-space:pre;-webkit-text-stroke:0.12px #111;transform:scaleX(0.895);transform-origin:0 50%;">Aciclovir Cinfa</div></div>
<div style="left:121.5px;top:211.5px;width:96.4px;height:11.8px;overflow:hidden"><div style="left:1.0px;top:0.5px;line-height:12px;font-size:8.6px;color:#111;white-space:pre;-webkit-text-stroke:0.12px #111;transform:scaleX(0.909);transform-origin:0 50%;">5 mg 30 comprimidos</div></div>
<div style="left:219.4px;top:211.5px;width:96.9px;height:11.8px;overflow:hidden"><div style="left:1.0px;top:0.5px;line-height:12px;font-size:8.6px;color:#111;white-space:pre;-webkit-text-stroke:0.12px #111;transform:scaleX(0.947);transform-origin:0 50%;">Antiviral</div></div>
<div style="left:359.59px;top:212px;line-height:12px;font-size:8.6px;color:#111;white-space:pre;-webkit-text-stroke:0.12px #111;transform:scaleX(0.901);transform-origin:0 50%;">3</div>
<div style="left:408.89px;top:212px;line-height:12px;font-size:8.6px;color:#111;white-space:pre;-webkit-text-stroke:0.12px #111;transform:scaleX(0.901);transform-origin:0 50%;">1</div>
<div style="left:415.6px;top:211.5px;width:75.7px;height:11.8px;overflow:hidden"><div style="left:1.0px;top:0.5px;line-height:12px;font-size:8.6px;color:#111;white-space:pre;-webkit-text-stroke:0.12px #111;transform:scaleX(0.916);transform-origin:0 50%;">Blister</div></div>
<div style="left:530.38px;top:212px;line-height:12px;font-size:8.6px;color:#111;white-space:pre;-webkit-text-stroke:0.12px #111;transform:scaleX(0.901);transform-origin:0 50%;">20</div>
<div style="left:591.2px;top:211.5px;width:53.6px;height:11.8px;overflow:hidden"><div style="left:1.0px;top:0.5px;line-height:12px;font-size:8.6px;color:#111;white-space:pre;-webkit-text-stroke:0.12px #111;transform:scaleX(0.912);transform-origin:0 50%;">Airtal (Aciclofenaco)</div></div>
<div style="left:684.58px;top:212px;line-height:12px;font-size:8.6px;color:#111;white-space:pre;-webkit-text-stroke:0.12px #111;transform:scaleX(0.901);transform-origin:0 50%;">52</div>
<div style="left:16.6px;top:223.3px;width:103.4px;height:11.8px;overflow:hidden"><div style="left:1.0px;top:0.5px;line-height:12px;font-size:8.6px;color:#111;white-space:pre;-webkit-text-stroke:0.12px #111;transform:scaleX(0.908);transform-origin:0 50%;">Aceclofenaco Normon</div></div>
<div style="left:121.5px;top:223.3px;width:96.4px;height:11.8px;overflow:hidden"><div style="left:1.0px;top:0.5px;line-height:12px;font-size:8.6px;color:#111;white-space:pre;-webkit-text-stroke:0.12px #111;transform:scaleX(0.908);transform-origin:0 50%;">100 mg 40 comprimidos</div></div>
<div style="left:219.4px;top:223.3px;width:96.9px;height:11.8px;overflow:hidden"><div style="left:1.0px;top:0.5px;line-height:12px;font-size:8.6px;color:#111;white-space:pre;-webkit-text-stroke:0.12px #111;transform:scaleX(0.958);transform-origin:0 50%;">Antiinflamatorio</div></div>
<div style="left:359.59px;top:223.8px;line-height:12px;font-size:8.6px;color:#111;white-space:pre;-webkit-text-stroke:0.12px #111;transform:scaleX(0.901);transform-origin:0 50%;">4</div>
<div style="left:408.89px;top:223.8px;line-height:12px;font-size:8.6px;color:#111;white-space:pre;-webkit-text-stroke:0.12px #111;transform:scaleX(0.901);transform-origin:0 50%;">2</div>
<div style="left:415.6px;top:223.3px;width:75.7px;height:11.8px;overflow:hidden"><div style="left:1.0px;top:0.5px;line-height:12px;font-size:8.6px;color:#111;white-space:pre;-webkit-text-stroke:0.12px #111;transform:scaleX(0.916);transform-origin:0 50%;">Blister</div></div>
<div style="left:530.38px;top:223.8px;line-height:12px;font-size:8.6px;color:#111;white-space:pre;-webkit-text-stroke:0.12px #111;transform:scaleX(0.901);transform-origin:0 50%;">43</div>
<div style="left:591.2px;top:223.3px;width:53.6px;height:11.8px;overflow:hidden"><div style="left:1.0px;top:0.5px;line-height:12px;font-size:8.6px;color:#111;white-space:pre;-webkit-text-stroke:0.12px #111;transform:scaleX(0.897);transform-origin:0 50%;">Zovirax (Aciclovir)</div></div>
<div style="left:680.28px;top:223.8px;line-height:12px;font-size:8.6px;color:#111;white-space:pre;-webkit-text-stroke:0.12px #111;transform:scaleX(0.901);transform-origin:0 50%;">120</div>
<div style="left:16.6px;top:235.1px;width:103.4px;height:11.8px;overflow:hidden"><div style="left:1.0px;top:0.5px;line-height:12px;font-size:8.6px;color:#111;white-space:pre;-webkit-text-stroke:0.12px #111;transform:scaleX(0.887);transform-origin:0 50%;">Aceclofenaco Cinfa</div></div>
<div style="left:121.5px;top:235.1px;width:96.4px;height:11.8px;overflow:hidden"><div style="left:1.0px;top:0.5px;line-height:12px;font-size:8.6px;color:#111;white-space:pre;-webkit-text-stroke:0.12px #111;transform:scaleX(0.908);transform-origin:0 50%;">100 mg 20 comprimidos</div></div>
<div style="left:219.4px;top:235.1px;width:96.9px;height:11.8px;overflow:hidden"><div style="left:1.0px;top:0.5px;line-height:12px;font-size:8.6px;color:#111;white-space:pre;-webkit-text-stroke:0.12px #111;transform:scaleX(0.958);transform-origin:0 50%;">Antiinflamatorio</div></div>
<div style="left:359.59px;top:235.6px;line-height:12px;font-size:8.6px;color:#111;white-space:pre;-webkit-text-stroke:0.12px #111;transform:scaleX(0.901);transform-origin:0 50%;">8</div>
<div style="left:408.89px;top:235.6px;line-height:12px;font-size:8.6px;color:#111;white-space:pre;-webkit-text-stroke:0.12px #111;transform:scaleX(0.901);transform-origin:0 50%;">3</div>
<div style="left:415.6px;top:235.1px;width:75.7px;height:11.8px;overflow:hidden"><div style="left:1.0px;top:0.5px;line-height:12px;font-size:8.6px;color:#111;white-space:pre;-webkit-text-stroke:0.12px #111;transform:scaleX(0.916);transform-origin:0 50%;">Blister</div></div>
<div style="left:530.38px;top:235.6px;line-height:12px;font-size:8.6px;color:#111;white-space:pre;-webkit-text-stroke:0.12px #111;transform:scaleX(0.901);transform-origin:0 50%;">45</div>
<div style="left:16.6px;top:246.9px;width:103.4px;height:11.8px;overflow:hidden"><div style="left:1.0px;top:0.5px;line-height:12px;font-size:8.6px;color:#111;white-space:pre;-webkit-text-stroke:0.12px #111;transform:scaleX(0.912);transform-origin:0 50%;">Airtal (Aciclofenaco)</div></div>
<div style="left:121.5px;top:246.9px;width:96.4px;height:11.8px;overflow:hidden"><div style="left:1.0px;top:0.5px;line-height:12px;font-size:8.6px;color:#111;white-space:pre;-webkit-text-stroke:0.12px #111;transform:scaleX(0.906);transform-origin:0 50%;">100 mg polvo</div></div>
<div style="left:219.4px;top:246.9px;width:96.9px;height:11.8px;overflow:hidden"><div style="left:1.0px;top:0.5px;line-height:12px;font-size:8.6px;color:#111;white-space:pre;-webkit-text-stroke:0.12px #111;transform:scaleX(0.958);transform-origin:0 50%;">Antiinflamatorio</div></div>
<div style="left:359.59px;top:247.4px;line-height:12px;font-size:8.6px;color:#111;white-space:pre;-webkit-text-stroke:0.12px #111;transform:scaleX(0.901);transform-origin:0 50%;">3</div>
<div style="left:408.89px;top:247.4px;line-height:12px;font-size:8.6px;color:#111;white-space:pre;-webkit-text-stroke:0.12px #111;transform:scaleX(0.901);transform-origin:0 50%;">2</div>
<div style="left:415.6px;top:246.9px;width:75.7px;height:11.8px;overflow:hidden"><div style="left:1.0px;top:0.5px;line-height:12px;font-size:8.6px;color:#111;white-space:pre;-webkit-text-stroke:0.12px #111;transform:scaleX(0.874);transform-origin:0 50%;">Sobre</div></div>
<div style="left:530.38px;top:247.4px;line-height:12px;font-size:8.6px;color:#111;white-space:pre;-webkit-text-stroke:0.12px #111;transform:scaleX(0.901);transform-origin:0 50%;">52</div>
<div style="left:16.6px;top:258.7px;width:103.4px;height:11.8px;overflow:hidden"><div style="left:1.0px;top:0.5px;line-height:12px;font-size:8.6px;color:#111;white-space:pre;-webkit-text-stroke:0.12px #111;transform:scaleX(0.897);transform-origin:0 50%;">Zovirax (Aciclovir)</div></div>
<div style="left:121.5px;top:258.7px;width:96.4px;height:11.8px;overflow:hidden"><div style="left:1.0px;top:0.5px;line-height:12px;font-size:8.6px;color:#111;white-space:pre;-webkit-text-stroke:0.12px #111;transform:scaleX(0.884);transform-origin:0 50%;">2 g crema</div></div>
<div style="left:219.4px;top:258.7px;width:96.9px;height:11.8px;overflow:hidden"><div style="left:1.0px;top:0.5px;line-height:12px;font-size:8.6px;color:#111;white-space:pre;-webkit-text-stroke:0.12px #111;transform:scaleX(0.947);transform-origin:0 50%;">Antiviral</div></div>
<div style="left:359.59px;top:259.2px;line-height:12px;font-size:8.6px;color:#111;white-space:pre;-webkit-text-stroke:0.12px #111;transform:scaleX(0.901);transform-origin:0 50%;">1</div>
<div style="left:408.89px;top:259.2px;line-height:12px;font-size:8.6px;color:#111;white-space:pre;-webkit-text-stroke:0.12px #111;transform:scaleX(0.901);transform-origin:0 50%;">0</div>
<div style="left:415.6px;top:258.7px;width:75.7px;height:11.8px;overflow:hidden"><div style="left:1.0px;top:0.5px;line-height:12px;font-size:8.6px;color:#111;white-space:pre;-webkit-text-stroke:0.12px #111;transform:scaleX(0.911);transform-origin:0 50%;">Tubo</div></div>
<div style="left:526.08px;top:259.2px;line-height:12px;font-size:8.6px;color:#111;white-space:pre;-webkit-text-stroke:0.12px #111;transform:scaleX(0.901);transform-origin:0 50%;">120</div>
<div style="left:693.4px;top:269.4px;width:51px;height:13.4px;border:2px solid #217346;box-sizing:border-box"></div>
<div style="left:741.6px;top:280.3px;width:3.8px;height:3.8px;background:#217346;border:0.6px solid #fff;box-sizing:border-box"></div>
<div style="left:834.9px;top:117px;width:13.1px;height:304.3px;background:#fff"></div>
<div style="left:836.8px;top:118.5px;width:9.2px;height:303.1px;background:#ececec"></div>
<div style="left:836.8px;top:118.5px;width:9.2px;height:9.8px;background:#fff;border:1px solid #c6c6c6;box-sizing:border-box"></div>
<div style="left:836.8px;top:128px;width:9.2px;height:261.7px;background:#fff;border:1px solid #c6c6c6;box-sizing:border-box"></div>
<div style="left:836.8px;top:412.4px;width:9.2px;height:9.2px;background:#fff;border:1px solid #c6c6c6;box-sizing:border-box"></div>
<div style="left:0px;top:421.3px;width:848px;height:16.8px;background:#f3f3f3"></div>
<div style="left:0px;top:421.1px;width:848px;height:1px;background:#c6c6c6"></div>
<div style="left:62.4px;top:421.3px;width:63.3px;height:15.9px;background:#fff"></div>
<div style="left:62.4px;top:435.5px;width:63.3px;height:1.6px;background:#217346"></div>
<div style="left:61.9px;top:421.3px;width:1px;height:15.7px;background:#c6c6c6"></div>
<div style="left:125.2px;top:421.3px;width:1px;height:15.7px;background:#c6c6c6"></div>
<div style="left:70px;top:423.4px;line-height:12px;font-size:8.6px;color:#217346;white-space:pre;transform:scaleX(0.876);transform-origin:0 50%;font-weight:bold;-webkit-text-stroke:0.12px #217346;">PRODUCTOS</div>
<div style="left:133.6px;top:423.2px;line-height:12px;font-size:8.3px;color:#444;white-space:pre;transform:scaleX(0.835);transform-origin:0 50%;-webkit-text-stroke:0.12px #444;">CLIENTES</div>
<div style="left:176.1px;top:424px;width:1px;height:12px;background:#c6c6c6"></div>
<div style="left:185px;top:423.2px;line-height:12px;font-size:8.3px;color:#444;white-space:pre;transform:scaleX(0.872);transform-origin:0 50%;-webkit-text-stroke:0.12px #444;">EMPLEADOS</div>
<div style="left:238px;top:424px;width:1px;height:12px;background:#c6c6c6"></div>
<div style="left:519.2px;top:425.4px;width:9.1px;height:9px;background:#fff;border:1px solid #c6c6c6;box-sizing:border-box"></div>
<div style="left:528.3px;top:425.4px;width:297.5px;height:9px;background:#e6e6e6"></div>
<div style="left:551.3px;top:425.4px;width:274.5px;height:9px;background:#fff;border:1px solid #c6c6c6;box-sizing:border-box"></div>
<div style="left:825.8px;top:425.4px;width:9.2px;height:9px;background:#fff;border:1px solid #c6c6c6;box-sizing:border-box"></div>
<div style="left:0px;top:438.1px;width:848px;height:13.9px;background:#217346"></div>
<div style="left:4.5px;top:439.3px;line-height:12px;font-size:7.6px;color:#fff;white-space:pre;transform:scaleX(0.756);transform-origin:0 50%;">LISTO</div>
<div style="left:665.5px;top:438.1px;width:22.2px;height:13.9px;background:#1a5c38"></div>
<div style="left:824px;top:439.3px;line-height:12px;font-size:8.3px;color:#fff;white-space:pre;transform:scaleX(0.793);transform-origin:0 50%;">90 %</div>
<div style="left:745px;top:444.5px;width:62px;height:1px;background:#cfe3d6"></div>
<div style="left:0px;top:452px;width:848px;height:25px;background:linear-gradient(90deg,#90a7bf 0px,#9db5cf 80px,#a9c2dc 180px,#a9c2dc 672px,#93a8c0 705px,#8aa0b7 770px,#879cb3 848px)"></div>
<div style="left:0px;top:452px;width:848px;height:1px;background:#5d7b95"></div>
<div style="left:0px;top:453px;width:848px;height:1px;background:#c9dbec"></div>
<div style="left:113.8px;top:453.5px;width:36.5px;height:23px;background:#c3d6ea;border:1px solid #6f8aa5;border-radius:2px;box-sizing:border-box"></div>
<div style="left:191.6px;top:453.5px;width:35.4px;height:23px;background:#c3d6ea;border:1px solid #6f8aa5;border-radius:2px;box-sizing:border-box"></div>
<div style="left:230px;top:453.5px;width:35.7px;height:23px;background:#c3d6ea;border:1px solid #6f8aa5;border-radius:2px;box-sizing:border-box"></div>
<div style="left:268.5px;top:453.5px;width:35.8px;height:23px;background:#c3d6ea;border:1px solid #6f8aa5;border-radius:2px;box-sizing:border-box"></div>
<div style="left:839px;top:453px;width:9px;height:24px;background:#93aac2;border-left:1px solid #6f8aa5;box-sizing:border-box"></div>
<svg style="left:5.7px;top:1.8px" width="11.5" height="10" viewBox="0 0 11.5 10"><path d="M0 1.2 L7.3 0 L7.3 10 L0 8.8 Z" fill="#1d6b3c"/><rect x="7.3" y="1.3" width="4" height="7.6" fill="#fff" stroke="#7fb08f" stroke-width="0.7"/><path d="M8.2 3.2h2.3M8.2 5h2.3M8.2 6.8h2.3" stroke="#8cc3a0" stroke-width="0.6"/><path d="M1.8 2.8 L5.4 7.3 M5.4 2.8 L1.8 7.3" stroke="#fff" stroke-width="1.2"/></svg>
<svg style="left:24.8px;top:2.5px" width="9" height="9" viewBox="0 0 9 9"><rect x="0.5" y="0.5" width="8" height="8" fill="none" stroke="#80449a" stroke-width="1"/><rect x="0.5" y="0.5" width="8" height="1.6" fill="#b594c6"/><rect x="2.2" y="5.8" width="4.6" height="2.7" fill="#80449a"/><rect x="3.6" y="6.5" width="1.8" height="1.4" fill="#fff"/></svg>
<svg style="left:42.5px;top:2.3px" width="10" height="9" viewBox="0 0 10 9"><path d="M3.2 0.8 L0.6 3.4 L3.2 6" fill="none" stroke="#2f6fbf" stroke-width="1.4"/><path d="M1 3.4 H5.6 A3 3 0 0 1 5.6 9.2 H4" fill="none" stroke="#2f6fbf" stroke-width="1.4"/></svg>
<svg style="left:54.75px;top:5.15px" width="3.5" height="2.1" viewBox="0 0 3.5 2.1"><path d="M0 0 L3.5 0 L1.75 1.93 Z" fill="#444"/></svg>
<svg style="left:67.3px;top:2.5px" width="9.5" height="8.5" viewBox="0 0 9.5 8.5"><path d="M6 0.8 L8.6 3.4 L6 6" fill="none" stroke="#9a9a9a" stroke-width="1.2"/><path d="M8.2 3.4 H3.8 A2.9 2.9 0 0 0 3.8 8.2 H5" fill="none" stroke="#9a9a9a" stroke-width="1.2"/></svg>
<svg style="left:79.65px;top:5.45px" width="3.5" height="2.1" viewBox="0 0 3.5 2.1"><path d="M0 0 L3.5 0 L1.75 1.93 Z" fill="#999"/></svg>
<svg style="left:91.8px;top:2.5px" width="10" height="9" viewBox="0 0 10 9"><rect x="0.5" y="0.5" width="9" height="8" fill="#fff" stroke="#888" stroke-width="0.9"/><rect x="0.5" y="0.5" width="9" height="1.5" fill="#2b5fb3"/><path d="M3 3.5h5M3 5.3h5M3 7.1h5" stroke="#bbb" stroke-width="0.7"/><path d="M1.8 3.5v4" stroke="#888" stroke-width="0.6"/></svg>
<svg style="left:109.8px;top:5px" width="3" height="4.5" viewBox="0 0 3 4.5"><rect x="0.4" y="0" width="2.2" height="1" fill="#777"/><path d="M0 2 H3 L1.5 3.8 Z" fill="#444"/></svg>
<svg style="left:764px;top:4.2px" width="5" height="6.2" viewBox="0 0 5 6.2"><path d="M0.7 1.7 C0.9 0.3 4.3 0.2 4.3 1.9 C4.3 3.2 2.5 3 2.5 4.3" fill="none" stroke="#333" stroke-width="1.1"/><circle cx="2.5" cy="5.7" r="0.6" fill="#333"/></svg>
<svg style="left:779.8px;top:4.3px" width="9.4" height="5.7" viewBox="0 0 9.4 5.7"><rect x="0.5" y="0.5" width="8.4" height="4.7" fill="none" stroke="#666" stroke-width="0.9"/><rect x="0.5" y="0.5" width="8.4" height="1.2" fill="#999"/><path d="M4.7 4.6 V2.2 M3.4 3.4 L4.7 2.2 L6 3.4" fill="none" stroke="#333" stroke-width="0.8"/></svg>
<div style="left:799px;top:7.7px;width:6.2px;height:1.2px;background:#444"></div>
<svg style="left:816.8px;top:4.4px" width="7.4" height="6" viewBox="0 0 7.4 6"><rect x="0.5" y="1.9" width="4.8" height="3.6" fill="none" stroke="#444" stroke-width="0.9"/><path d="M2 1.9 V0.5 H6.9 V4.2 H5.3" fill="none" stroke="#444" stroke-width="0.9"/></svg>
<svg style="left:835.5px;top:4.5px" width="6.3" height="5.6" viewBox="0 0 6.3 5.6"><path d="M0.4 0.4 L5.9 5.2 M5.9 0.4 L0.4 5.2" stroke="#333" stroke-width="1.1"/></svg>
<svg style="left:9px;top:35.5px" width="18.5" height="19.5" viewBox="0 0 18.5 19.5"><rect x="0.3" y="2.5" width="14.8" height="14.8" fill="#d9d9d9"/><path d="M4.6 3.6 V2 H6.4 Q7.5 0.2 8.6 2 H10.4 V3.6 Z" fill="#e6e6e6" stroke="#bdbdbd" stroke-width="0.7"/><path d="M9.5 7.5 H15.3 L17.8 10 V19 H9.5 Z" fill="#fff" stroke="#b5b5b5" stroke-width="0.8"/><path d="M15.3 7.5 V10 H17.8" fill="none" stroke="#b5b5b5" stroke-width="0.7"/></svg>
<svg style="left:15.05px;top:70.15px" width="3.5" height="2.1" viewBox="0 0 3.5 2.1"><path d="M0 0 L3.5 0 L1.75 1.93 Z" fill="#aaa"/></svg>
<svg style="left:31.8px;top:35px" width="9.5" height="9.5" viewBox="0 0 9.5 9.5"><path d="M2.2 0.3 L6.3 6.3 M7.2 0.3 L3.1 6.3" stroke="#444" stroke-width="0.9"/><circle cx="2.4" cy="7.5" r="1.6" fill="none" stroke="#3a7cc4" stroke-width="1"/><circle cx="7" cy="7.5" r="1.6" fill="none" stroke="#3a7cc4" stroke-width="1"/></svg>
<svg style="left:31px;top:49.4px" width="10.5" height="9.8" viewBox="0 0 10.5 9.8"><path d="M0.5 0.5 H4.6 L6 2 V7.3 H0.5 Z" fill="#fff" stroke="#777" stroke-width="0.8"/><path d="M4.3 2.8 H8.4 L10 4.4 V9.3 H4.3 Z" fill="#fff" stroke="#777" stroke-width="0.8"/><path d="M1.8 2.5v3.2M5.6 4.6v3.3" stroke="#4d8fd1" stroke-width="1.1"/></svg>
<svg style="left:45.25px;top:53.15px" width="3.5" height="2.1" viewBox="0 0 3.5 2.1"><path d="M0 0 L3.5 0 L1.75 1.93 Z" fill="#555"/></svg>
<svg style="left:31.8px;top:63.8px" width="10.5" height="9" viewBox="0 0 10.5 9"><path d="M0.4 5.4 L4.3 1.6 L7.6 4.9 L3.7 8.7 Z" fill="#e1b673"/><path d="M4.3 1.6 L6.2 -0.3 L9.5 3 L7.6 4.9 Z" fill="#444"/><path d="M7.6 1.8 L10.2 0.4" stroke="#444" stroke-width="1.4"/></svg>
<svg style="left:48px;top:81px" width="5.5" height="5.5" viewBox="0 0 5.5 5.5"><path d="M0.4 0.4 H4 M0.4 0.4 V4" stroke="#888" stroke-width="0.8" fill="none"/><path d="M1.5 1.5 L5 5 M5 2.5 V5 H2.5" stroke="#555" stroke-width="0.9" fill="none"/></svg>
<svg style="left:177px;top:81.5px" width="5" height="5" viewBox="0 0 5 5"><path d="M0.4 0.4 H3.6 M0.4 0.4 V3.6" stroke="#888" stroke-width="0.7" fill="none"/><path d="M1.3 1.3 L4.6 4.6 M4.6 2.3 V4.6 H2.3" stroke="#555" stroke-width="0.8" fill="none"/></svg>
<svg style="left:351px;top:81.5px" width="5" height="5" viewBox="0 0 5 5"><path d="M0.4 0.4 H3.6 M0.4 0.4 V3.6" stroke="#888" stroke-width="0.7" fill="none"/><path d="M1.3 1.3 L4.6 4.6 M4.6 2.3 V4.6 H2.3" stroke="#555" stroke-width="0.8" fill="none"/></svg>
<svg style="left:440px;top:81.5px" width="5" height="5" viewBox="0 0 5 5"><path d="M0.4 0.4 H3.6 M0.4 0.4 V3.6" stroke="#888" stroke-width="0.7" fill="none"/><path d="M1.3 1.3 L4.6 4.6 M4.6 2.3 V4.6 H2.3" stroke="#555" stroke-width="0.8" fill="none"/></svg>
<svg style="left:835.7px;top:81.5px" width="6.5" height="4" viewBox="0 0 6.5 4"><path d="M0.5 3.5 L3.25 0.8 L6 3.5" fill="none" stroke="#444" stroke-width="1.2"/></svg>
<div style="left:62.3px;top:58px;line-height:12px;font-size:8.6px;color:#333;white-space:pre;transform:scaleX(0.921);transform-origin:0 50%;font-weight:bold;-webkit-text-stroke:0.12px #333;">N</div>
<div style="left:76px;top:58px;line-height:12px;font-size:8.6px;color:#333;white-space:pre;transform:scaleX(0.791);transform-origin:0 50%;font-weight:bold;-webkit-text-stroke:0.12px #333;font-style:italic;">K</div>
<div style="left:90px;top:57.4px;line-height:12px;font-size:8.4px;color:#444;white-space:pre;transform:scaleX(0.853);transform-origin:0 50%;-webkit-text-stroke:0.3px #444;">S</div>
<div style="left:90px;top:67.85px;width:5px;height:0.7px;background:#555"></div>
<svg style="left:101.05px;top:63.15px" width="3.5" height="2.1" viewBox="0 0 3.5 2.1"><path d="M0 0 L3.5 0 L1.75 1.93 Z" fill="#666"/></svg>
<div style="left:109.1px;top:57px;width:1px;height:14px;background:#e1e1e1"></div>
<svg style="left:114.9px;top:60.3px" width="8" height="7.8" viewBox="0 0 8 7.8"><rect x="0.4" y="0.4" width="7.2" height="7" fill="none" stroke="#bbb" stroke-width="0.8"/><path d="M4 0.4 V7.4 M0.4 3.9 H7.6" stroke="#ccc" stroke-width="0.7"/></svg>
<svg style="left:127.75px;top:63.15px" width="3.5" height="2.1" viewBox="0 0 3.5 2.1"><path d="M0 0 L3.5 0 L1.75 1.93 Z" fill="#666"/></svg>
<div style="left:135.8px;top:57px;width:1px;height:14px;background:#e1e1e1"></div>
<svg style="left:141.7px;top:59.2px" width="9.5" height="7.3" viewBox="0 0 9.5 7.3"><path d="M1.2 3.6 L4.4 0.6 L7.5 3.7 L4.4 6.7 Z" fill="#fff" stroke="#555" stroke-width="0.8"/><path d="M3.4 0.3 L2.6 -0.5" stroke="#555" stroke-width="0.7"/><path d="M7.9 3.3 C9 4.5 9.2 5.6 8.4 6" stroke="#2e75c6" stroke-width="1.3" fill="none"/></svg>
<div style="left:141.7px;top:66.8px;width:9.1px;height:1.9px;background:#ffe100"></div>
<svg style="left:154.25px;top:63.15px" width="3.5" height="2.1" viewBox="0 0 3.5 2.1"><path d="M0 0 L3.5 0 L1.75 1.93 Z" fill="#666"/></svg>
<div style="left:164px;top:58px;line-height:12px;font-size:8.6px;color:#3a3a3a;white-space:pre;transform:scaleX(1.041);transform-origin:0 50%;-webkit-text-stroke:0.3px #3a3a3a;">A</div>
<svg style="left:175.05px;top:63.15px" width="3.5" height="2.1" viewBox="0 0 3.5 2.1"><path d="M0 0 L3.5 0 L1.75 1.93 Z" fill="#666"/></svg>
<div style="left:158px;top:39.4px;line-height:12px;font-size:8.8px;color:#3a3a3a;white-space:pre;transform:scaleX(0.950);transform-origin:0 50%;-webkit-text-stroke:0.25px #3a3a3a;">A</div>
<svg style="left:162.8px;top:40.4px" width="3.6" height="2" viewBox="0 0 3.6 2"><path d="M0 2 L1.8 0 L3.6 2 Z" fill="#2e75c6"/></svg>
<div style="left:172px;top:40.2px;line-height:12px;font-size:7.2px;color:#3a3a3a;white-space:pre;-webkit-text-stroke:0.25px #3a3a3a;">A</div>
<svg style="left:175.8px;top:40.2px" width="3.6" height="2" viewBox="0 0 3.6 2"><path d="M0 0 L3.6 0 L1.8 2 Z" fill="#2e75c6"/></svg>
<svg style="left:189.2px;top:39.6px" width="9" height="5" viewBox="0 0 9 5"><path d="M0 0.6h9M0 2.5h9M0 4.4h9" stroke="#9a9a9a" stroke-width="0.9"/></svg>
<svg style="left:202.9px;top:41.9px" width="9" height="5" viewBox="0 0 9 5"><path d="M0 0.6h9M0 2.5h9M0 4.4h9" stroke="#666" stroke-width="0.9"/></svg>
<div style="left:214px;top:38px;width:13.9px;height:13.9px;background:#9fd5b4"></div>
<svg style="left:216.6px;top:44.8px" width="8.8" height="5.4" viewBox="0 0 8.8 5.4"><path d="M0 0.6h8.8M0 2.7h8.8M0 4.8h8.8" stroke="#4b5a50" stroke-width="0.9"/></svg>
<svg style="left:235px;top:40px" width="11" height="9.2" viewBox="0 0 11 9.2"><path d="M0.8 5.8 L4.8 1.8 M2.6 7.3 L6.6 3.3" stroke="#555" stroke-width="1.2"/><path d="M2.5 9 L10.5 1" stroke="#444" stroke-width="0.9"/><path d="M9.3 1.2 L10.8 -0.2" stroke="#444" stroke-width="1.6"/></svg>
<svg style="left:247.55px;top:44.15px" width="3.5" height="2.1" viewBox="0 0 3.5 2.1"><path d="M0 0 L3.5 0 L1.75 1.93 Z" fill="#555"/></svg>
<div style="left:229.8px;top:38px;width:1px;height:14px;background:#e1e1e1"></div>
<div style="left:229.8px;top:57px;width:1px;height:14px;background:#e1e1e1"></div>
<div style="left:262.7px;top:38px;width:1px;height:33px;background:#e1e1e1"></div>
<svg style="left:189.2px;top:60.9px" width="9" height="6.6" viewBox="0 0 9 6.6"><path d="M0 0.5h9M0 2.3h5.5M0 4.1h9M0 5.9h5.5" stroke="#9a9a9a" stroke-width="0.9"/></svg>
<svg style="left:203px;top:60.9px" width="9" height="6.6" viewBox="0 0 9 6.6"><path d="M0 0.5h9M1.8 2.3h5.5M0 4.1h9M1.8 5.9h5.5" stroke="#9a9a9a" stroke-width="0.9"/></svg>
<svg style="left:216.6px;top:60.9px" width="9" height="6.6" viewBox="0 0 9 6.6"><path d="M0 0.5h9M3.5 2.3h5.5M0 4.1h9M3.5 5.9h5.5" stroke="#9a9a9a" stroke-width="0.9"/></svg>
<svg style="left:235px;top:60.9px" width="11" height="6.8" viewBox="0 0 11 6.8"><path d="M3 0.5h8M5 2.4h6M5 4.3h6M3 6.2h8" stroke="#9a9a9a" stroke-width="0.9"/><path d="M0.3 3.4 L3 1.2 V5.6 Z" fill="#2e75c6"/><path d="M2.5 3.4h2.5" stroke="#2e75c6" stroke-width="1.2"/></svg>
<svg style="left:249px;top:60.9px" width="11" height="6.8" viewBox="0 0 11 6.8"><path d="M3 0.5h8M5 2.4h6M5 4.3h6M3 6.2h8" stroke="#9a9a9a" stroke-width="0.9"/><path d="M4.6 3.4 L1.9 1.2 V5.6 Z" fill="#2e75c6"/><path d="M0 3.4h2.5" stroke="#2e75c6" stroke-width="1.2"/></svg>
<svg style="left:268px;top:39.8px" width="11" height="10" viewBox="0 0 11 10"><rect x="0.5" y="0.5" width="7" height="9" fill="#fff" stroke="#888" stroke-width="0.8"/><path d="M0.5 3h7M0.5 6h7" stroke="#aaa" stroke-width="0.6"/><path d="M1.6 1.8h5.5" stroke="#5b9bd5" stroke-width="1"/><path d="M1.6 4.5h3.5M1.6 7.4h3.5" stroke="#5b9bd5" stroke-width="1"/><path d="M7.5 1.8 H9.8 V5 H7" fill="none" stroke="#2e75c6" stroke-width="0.9"/><path d="M7.8 3.6 L6.4 5 L7.8 6.4" fill="none" stroke="#2e75c6" stroke-width="0.9"/></svg>
<svg style="left:268px;top:58.7px" width="9.8" height="10" viewBox="0 0 9.8 10"><rect x="0.5" y="0.5" width="8.8" height="9" fill="#fff" stroke="#777" stroke-width="0.8"/><path d="M0.5 2.6h8.8M0.5 7.4h8.8" stroke="#999" stroke-width="0.6"/><path d="M1.6 5h6.6" stroke="#2e75c6" stroke-width="0.9"/><path d="M2.6 3.9 L1.4 5 L2.6 6.1 M7.2 3.9 L8.4 5 L7.2 6.1" fill="none" stroke="#2e75c6" stroke-width="0.8"/></svg>
<svg style="left:363px;top:59px" width="10.5" height="10" viewBox="0 0 10.5 10"><rect x="0.5" y="0.5" width="9.5" height="5" fill="#fff" stroke="#2e75c6" stroke-width="1"/><ellipse cx="5.2" cy="3" rx="1.8" ry="1.4" fill="none" stroke="#2e75c6" stroke-width="0.8"/><rect x="2.6" y="5.2" width="4" height="4.4" fill="#f3c27e"/><rect x="5.8" y="3.5" width="4" height="4.4" fill="#f0b15c"/></svg>
<svg style="left:376.65px;top:63.15px" width="3.5" height="2.1" viewBox="0 0 3.5 2.1"><path d="M0 0 L3.5 0 L1.75 1.93 Z" fill="#555"/></svg>
<div style="left:385.8px;top:58.4px;line-height:12px;font-size:10.6px;color:#3a3a3a;white-space:pre;transform:scaleX(0.827);transform-origin:0 50%;-webkit-text-stroke:0.12px #3a3a3a;">%</div>
<div style="left:398px;top:57.8px;line-height:12px;font-size:6.6px;color:#3a3a3a;white-space:pre;transform:scaleX(0.889);transform-origin:0 50%;-webkit-text-stroke:0.15px #3a3a3a;">000</div>
<div style="left:411.6px;top:57px;width:1px;height:14px;background:#e1e1e1"></div>
<svg style="left:416.5px;top:59px" width="10.5" height="9.5" viewBox="0 0 10.5 9.5"><ellipse cx="8.5" cy="2.1" rx="1.15" ry="1.75" fill="none" stroke="#555" stroke-width="0.8"/><ellipse cx="5.3" cy="6.8" rx="1.15" ry="1.75" fill="none" stroke="#555" stroke-width="0.8"/><ellipse cx="8.5" cy="6.8" rx="1.15" ry="1.75" fill="none" stroke="#555" stroke-width="0.8"/><path d="M0.6 2.8 L3 1.2 V4.4 Z" fill="#2e75c6"/><path d="M2.6 2.8 H5" stroke="#7fb0e0" stroke-width="0.9"/></svg>
<svg style="left:430.4px;top:59px" width="10.5" height="9.5" viewBox="0 0 10.5 9.5"><ellipse cx="3.8" cy="2.1" rx="1.15" ry="1.75" fill="none" stroke="#555" stroke-width="0.8"/><ellipse cx="7.2" cy="2.1" rx="1.15" ry="1.75" fill="none" stroke="#555" stroke-width="0.8"/><ellipse cx="7.2" cy="6.8" rx="1.15" ry="1.75" fill="none" stroke="#555" stroke-width="0.8"/><path d="M4.8 7.2 L2.4 5.6 V8.8 Z" fill="#2e75c6"/><path d="M0.2 7.2 H2.8" stroke="#7fb0e0" stroke-width="0.9"/></svg>
<svg style="left:462px;top:36px" width="20" height="19" viewBox="0 0 20 19"><rect x="0.4" y="0.4" width="17" height="15.2" fill="#fff" stroke="#888" stroke-width="0.8"/><path d="M4.3 0.4v15.2M8.6 0.4v15.2M12.9 0.4v15.2M0.4 4.2h17M0.4 8h17M0.4 11.8h17" stroke="#aaa" stroke-width="0.6"/><rect x="4.6" y="0.8" width="3" height="3.2" fill="#e0483a"/><rect x="4.6" y="4.5" width="6.5" height="3.2" fill="#2e75c6"/><rect x="4.6" y="8.3" width="4.2" height="3.2" fill="#e0483a"/><rect x="4.6" y="12" width="3" height="3.4" fill="#2e75c6"/><rect x="9" y="10.4" width="10.4" height="8.2" fill="#fff" stroke="#777" stroke-width="0.8"/><path d="M11.8 13.3h5M11.8 15.5h5M15.3 11.8 L13.3 17" stroke="#333" stroke-width="0.8"/></svg>
<svg style="left:508.5px;top:37px" width="19" height="18" viewBox="0 0 19 18"><rect x="0.4" y="0.4" width="15.6" height="12.2" fill="#fff" stroke="#888" stroke-width="0.8"/><rect x="4.4" y="3.5" width="11.5" height="9" fill="#c5d9ef"/><path d="M4.2 0.4v12.2M8.1 0.4v12.2M12 0.4v12.2M0.4 3.5h15.6M0.4 6.6h15.6M0.4 9.6h15.6" stroke="#aaa" stroke-width="0.6"/><path d="M9 12 L17.8 4.5" stroke="#555" stroke-width="1.3"/><path d="M15.6 4.8 L18.6 2" stroke="#444" stroke-width="2"/><path d="M4.5 17.8 C5.5 14.5 7 12.5 9.3 12 L10.6 13.3 C10.5 15.8 8 17.2 4.5 17.8 Z" fill="#2e75c6"/></svg>
<svg style="left:548.6px;top:36px" width="19" height="19" viewBox="0 0 19 19"><rect x="0.4" y="0.4" width="15.8" height="13" fill="#fff" stroke="#888" stroke-width="0.8"/><path d="M0.4 3.3h15.8M0.4 10.5h15.8M2.8 0.4v13M13.8 0.4v13" stroke="#aaa" stroke-width="0.6"/><rect x="3.2" y="3.7" width="10.2" height="6.5" fill="#b8d2ee" stroke="#8ab0dc" stroke-width="0.5"/><path d="M9.2 13 L18 5.5" stroke="#555" stroke-width="1.3"/><path d="M15.8 5.8 L18.8 3" stroke="#444" stroke-width="2"/><path d="M4.7 18.8 C5.7 15.5 7.2 13.5 9.5 13 L10.8 14.3 C10.7 16.8 8.2 18.2 4.7 18.8 Z" fill="#2e75c6"/></svg>
<svg style="left:584.6px;top:35.8px" width="17" height="17.5" viewBox="0 0 17 17.5"><rect x="0.4" y="0.4" width="9" height="3.5" fill="#fff" stroke="#777" stroke-width="0.8"/><path d="M4.9 0.4v3.5" stroke="#777" stroke-width="0.7"/><rect x="0.4" y="10.3" width="9" height="6.7" fill="#fff" stroke="#777" stroke-width="0.8"/><path d="M4.9 10.3v6.7M0.4 13.6h9" stroke="#777" stroke-width="0.7"/><rect x="6.8" y="5.4" width="9.6" height="3.6" fill="#b8d2ee" stroke="#777" stroke-width="0.8"/><path d="M11.6 5.4v3.6" stroke="#777" stroke-width="0.7"/><path d="M0.4 7.2 L2.6 5.4 V9 Z" fill="#2e75c6"/><path d="M2.4 7.2h3" stroke="#2e75c6" stroke-width="1.1"/></svg>
<svg style="left:612.2px;top:35.8px" width="19.5" height="17.5" viewBox="0 0 19.5 17.5"><rect x="0.4" y="0.4" width="9" height="3.5" fill="#fff" stroke="#777" stroke-width="0.8"/><path d="M4.9 0.4v3.5" stroke="#777" stroke-width="0.7"/><rect x="0.4" y="10.3" width="9" height="6.7" fill="#fff" stroke="#777" stroke-width="0.8"/><path d="M4.9 10.3v6.7M0.4 13.6h9" stroke="#777" stroke-width="0.7"/><rect x="4.5" y="5.4" width="5.2" height="3.6" fill="#b8d2ee" stroke="#777" stroke-width="0.8"/><path d="M10.2 4 L18.6 11.6 M18.6 4 L10.2 11.6" stroke="#e04a32" stroke-width="1.3"/></svg>
<svg style="left:642.6px;top:35.5px" width="19" height="20" viewBox="0 0 19 20"><path d="M0.8 1.3h14.6" stroke="#2e75c6" stroke-width="0.7"/><path d="M0.6 0 V2.6 M15.6 0 V2.6" stroke="#2e75c6" stroke-width="0.8"/><path d="M1.2 1.3 L3 0.2 V2.4 Z M15 1.3 L13.2 0.2 V2.4 Z" fill="#2e75c6"/><rect x="0.6" y="4.2" width="17.6" height="12.5" fill="#fff" stroke="#777" stroke-width="0.8"/><path d="M5 4.2v15M9.8 4.2v15M14.4 4.2v12.5M0.6 7.6h17.6M0.6 13h17.6" stroke="#999" stroke-width="0.6"/><rect x="5.6" y="7.8" width="4" height="5" fill="#2e75c6"/><path d="M0.6 16.7 V19.2 H9.8 L10.5 17.5 H14.4 V16.7" fill="#fff" stroke="#777" stroke-width="0.7"/></svg>
<svg style="left:675px;top:36px" width="9.2" height="8.6" viewBox="0 0 9.2 8.6"><path d="M8.8 1.4 V0.5 H0.6 L4.6 4.3 L0.6 8.1 H8.8 V7.2" fill="none" stroke="#333" stroke-width="1.1"/></svg>
<svg style="left:675px;top:49.2px" width="9.3" height="10" viewBox="0 0 9.3 10"><rect x="0.5" y="0.5" width="8.3" height="9" fill="#fff" stroke="#777" stroke-width="0.8"/><rect x="0.5" y="0.5" width="8.3" height="1.6" fill="#555"/><path d="M4.65 3.2 V7.6 M2.6 5.6 L4.65 7.7 L6.7 5.6" fill="none" stroke="#2e75c6" stroke-width="1.1"/></svg>
<svg style="left:675.6px;top:64px" width="8.8" height="8.6" viewBox="0 0 8.8 8.6"><path d="M0.8 5.8 L5 1.6 Q5.8 0.8 6.6 1.6 L8 3 Q8.8 3.8 8 4.6 L4.2 8.4 H2.8 Z" fill="#f08080" stroke="#d25050" stroke-width="0.6"/><path d="M2.5 4.3 L5.8 7.2" stroke="#fff" stroke-width="0.7"/><path d="M0.4 8.4 H8.4" stroke="#999" stroke-width="0.6"/></svg>
<div style="left:739.3px;top:34.4px;line-height:12px;font-size:9.2px;color:#2e75c6;white-space:pre;transform:scaleX(1.087);transform-origin:0 50%;-webkit-text-stroke:0.12px #2e75c6;">A</div>
<div style="left:739.7px;top:42.9px;line-height:12px;font-size:9.6px;color:#8e44ad;white-space:pre;transform:scaleX(1.025);transform-origin:0 50%;-webkit-text-stroke:0.12px #8e44ad;">Z</div>
<svg style="left:746.8px;top:41px" width="11" height="9.6" viewBox="0 0 11 9.6"><path d="M0.2 0.3 H10.6 L6.5 4.6 V9.4 L4.3 8.2 V4.6 Z" fill="#808080"/><path d="M1.6 0.9 L5 4.4" stroke="#b0b0b0" stroke-width="0.7"/></svg>
<svg style="left:778.2px;top:37px" width="16.8" height="14.8" viewBox="0 0 16.8 14.8"><path d="M3 0.4 H6.6 V4.6 H7.6 V14.6 H0.4 V7 L2.2 5 H3 Z" fill="#5f5f5f"/><path d="M13.8 0.4 H10.2 V4.6 H9.2 V14.6 H16.4 V7 L14.6 5 H13.8 Z" fill="#5f5f5f"/><rect x="6.8" y="5.2" width="3.2" height="4.5" fill="#777"/><path d="M1.2 8 V14 M15.6 8 V14" stroke="#9a9a9a" stroke-width="0.8"/></svg>
<div style="left:75px;top:100.2px;width:1.3px;height:1.2px;background:#8a8a8a"></div>
<div style="left:75px;top:102.6px;width:1.3px;height:1.2px;background:#8a8a8a"></div>
<div style="left:75px;top:105px;width:1.3px;height:1.2px;background:#8a8a8a"></div>
<svg style="left:91.2px;top:98.5px" width="10.8" height="9.6" viewBox="0 0 10.8 9.6"><path d="M0.5 0.5 L10.3 9.1 M10.3 0.5 L0.5 9.1" stroke="#b5b5b5" stroke-width="1"/></svg>
<svg style="left:113.3px;top:99px" width="12" height="9.5" viewBox="0 0 12 9.5"><path d="M0.6 5 L4.2 8.6 L11.4 0.6" fill="none" stroke="#c4c4c4" stroke-width="1.6"/></svg>
<div style="left:134.8px;top:96.6px;line-height:12px;font-family:'Liberation Serif',serif;font-style:italic;font-size:13px;color:#4a4a4a;letter-spacing:-0.9px;-webkit-text-stroke:0.2px #4a4a4a">fx</div>
<svg style="left:837.6px;top:101px" width="7.4" height="5" viewBox="0 0 7.4 5"><path d="M0.8 0.8 L3.7 3.9 L6.6 0.8" fill="none" stroke="#555" stroke-width="1.6"/></svg>
<svg style="left:16.5px;top:426.5px" width="3" height="5" viewBox="0 0 3 5"><path d="M2.6 0.3 L0.4 2.5 L2.6 4.7" fill="none" stroke="#bbb" stroke-width="0.9"/></svg>
<svg style="left:34.3px;top:426.5px" width="3" height="5" viewBox="0 0 3 5"><path d="M0.4 0.3 L2.6 2.5 L0.4 4.7" fill="none" stroke="#bbb" stroke-width="0.9"/></svg>
<svg style="left:259.4px;top:423.8px" width="10.4" height="10.4" viewBox="0 0 10.4 10.4"><circle cx="5.2" cy="5.2" r="4.6" fill="none" stroke="#666" stroke-width="0.9"/><path d="M5.2 2.4v5.6M2.4 5.2h5.6" stroke="#555" stroke-width="1.1"/></svg>
<div style="left:508.5px;top:425.6px;width:1.5px;height:1.3px;background:#aaa"></div>
<div style="left:508.5px;top:428.6px;width:1.5px;height:1.3px;background:#aaa"></div>
<div style="left:508.5px;top:431.6px;width:1.5px;height:1.3px;background:#aaa"></div>
<svg style="left:522px;top:427.6px" width="3" height="4.4" viewBox="0 0 3 4.4"><path d="M2.8 0 V4.4 L0 2.2 Z" fill="#555"/></svg>
<svg style="left:829px;top:427.6px" width="3" height="4.4" viewBox="0 0 3 4.4"><path d="M0.2 0 V4.4 L3 2.2 Z" fill="#555"/></svg>
<svg style="left:839.6px;top:121.8px" width="4" height="2.6" viewBox="0 0 4 2.6"><path d="M0 2.6 L2 0 L4 2.6 Z" fill="#555"/></svg>
<svg style="left:839.6px;top:415.6px" width="4" height="2.6" viewBox="0 0 4 2.6"><path d="M0 0 L4 0 L2 2.6 Z" fill="#555"/></svg>
<svg style="left:672.2px;top:440.4px" width="8.4" height="8.6" viewBox="0 0 8.4 8.6"><rect x="0.4" y="0.4" width="7.6" height="7.8" fill="none" stroke="#fff" stroke-width="0.8"/><path d="M2.9 0.4v7.8M5.4 0.4v7.8M0.4 3h7.6M0.4 5.6h7.6" stroke="#fff" stroke-width="0.7"/></svg>
<svg style="left:695.5px;top:440.4px" width="10" height="8.6" viewBox="0 0 10 8.6"><rect x="0.4" y="0.4" width="9.2" height="7.8" fill="none" stroke="#cfe3d6" stroke-width="0.8"/><path d="M2.6 0.4v7.8M7.4 0.4v7.8M4 1.5v5.6M6 1.5v5.6" stroke="#cfe3d6" stroke-width="0.6"/></svg>
<svg style="left:718.8px;top:440.4px" width="9.6" height="8.6" viewBox="0 0 9.6 8.6"><rect x="0.4" y="0.4" width="8.8" height="7.8" fill="none" stroke="#fff" stroke-width="0.8"/><rect x="2" y="0.4" width="2" height="4.6" fill="#fff"/><rect x="5.4" y="0.4" width="2" height="4.6" fill="#fff"/></svg>
<div style="left:738.7px;top:444.6px;width:3.9px;height:1.2px;background:#fff"></div>
<svg style="left:809.6px;top:442.6px" width="5" height="5" viewBox="0 0 5 5"><path d="M2.5 0v5M0 2.5h5" stroke="#fff" stroke-width="1.2"/></svg>
<div style="left:771.5px;top:441px;width:3.4px;height:8px;background:#fff"></div>
<div style="left:775.95px;top:443.6px;width:0.7px;height:3px;background:#dfeee5"></div>
<svg style="left:5px;top:452.8px" width="24" height="24" viewBox="0 0 24 24"><defs><radialGradient id="orb" cx="50%" cy="85%" r="75%"><stop offset="0" stop-color="#8fe3ff"/><stop offset="0.45" stop-color="#2f86c8"/><stop offset="1" stop-color="#1a4f8a"/></radialGradient></defs><circle cx="12" cy="11.6" r="11" fill="url(#orb)" stroke="#6f8fb0" stroke-width="0.9"/><path d="M6.5 7.5 Q9 6.5 11.3 7.8 L10.6 11.2 Q8.3 10 5.8 11 Z" fill="#f0632a"/><path d="M12.3 8 Q14.6 9.2 17.3 8.2 L16.6 11.6 Q14 12.5 11.7 11.4 Z" fill="#8bc34a"/><path d="M5.6 12 Q8 11 10.4 12.2 L9.7 15.6 Q7.4 14.4 4.9 15.4 Z" fill="#2196f3"/><path d="M11.4 12.4 Q13.8 13.6 16.4 12.6 L15.7 16 Q13.2 17 10.8 15.8 Z" fill="#ffc107"/><ellipse cx="12" cy="5.8" rx="7.5" ry="4.2" fill="#fff" opacity="0.3"/></svg>
<div style="left:36.15px;top:455px;width:0.7px;height:20px;background:#8399b1"></div>
<div style="left:36.9px;top:455px;width:0.6px;height:20px;background:#b3c6da"></div>
<svg style="left:46.5px;top:457px" width="16.5" height="16" viewBox="0 0 16.5 16"><rect x="0.5" y="0.5" width="15.5" height="15" rx="1.5" fill="#b9d6f2" stroke="#8fb8df" stroke-width="0.8"/><circle cx="6.8" cy="8" r="5" fill="#f57c00"/><circle cx="6.8" cy="8" r="4" fill="#ff9a1f"/><path d="M5.3 5.3 L9.6 8 L5.3 10.7 Z" fill="#fff"/></svg>
<div style="left:72.25px;top:455px;width:0.7px;height:20px;background:#8399b1"></div>
<div style="left:73px;top:455px;width:0.6px;height:20px;background:#b9cde2"></div>
<svg style="left:84.2px;top:454.6px" width="19.6" height="19.6" viewBox="0 0 19.6 19.6"><defs><radialGradient id="ff" cx="65%" cy="25%" r="80%"><stop offset="0" stop-color="#fff04a"/><stop offset="0.4" stop-color="#ff9a1c"/><stop offset="1" stop-color="#e02a3c"/></radialGradient></defs><circle cx="9.8" cy="10" r="9.3" fill="url(#ff)"/><circle cx="10" cy="10.6" r="4.6" fill="#7a3fc0"/><circle cx="10.4" cy="10.2" r="3.2" fill="#4a5fe0"/><path d="M2.5 7 Q5 3.8 9 5.2 Q6.8 6.8 7 9.6 Q8 12.6 11.2 12.8 Q14.5 12.6 15.4 10 Q15 15.8 9.6 16.2 Q4 16 2.6 11 Z" fill="#ff7a1f"/><path d="M12.5 0.8 Q18 3 18.8 9 Q16.5 5 13.2 4.2 Z" fill="#ffd84a"/></svg>
<svg style="left:123.2px;top:455px" width="18.4" height="18.4" viewBox="0 0 18.4 18.4"><path d="M9.2 9.2 L1.58 4.8 A8.8 8.8 0 0 1 16.82 4.8 Z" fill="#db4437"/><path d="M9.2 9.2 L16.82 4.8 A8.8 8.8 0 0 1 9.2 18 Z" fill="#f4c20d"/><path d="M9.2 9.2 L9.2 18 A8.8 8.8 0 0 1 1.58 4.8 Z" fill="#0f9d58"/><circle cx="9.2" cy="9.2" r="4.3" fill="#fff"/><circle cx="9.2" cy="9.2" r="3.3" fill="#4285f4"/></svg>
<svg style="left:160.6px;top:454.6px" width="20" height="19.4" viewBox="0 0 20 19.4"><text x="2.6" y="17.8" font-family="Liberation Sans" font-weight="bold" font-size="25" fill="#2a9be6">e</text><path d="M2.2 17.5 C-0.8 14.5 4 7 10 3.6 C15.5 0.5 19.5 0.6 19.2 3.2 C19 4.6 18 6 17.2 7" fill="none" stroke="#f2c230" stroke-width="1.6"/></svg>
<svg style="left:199.6px;top:455.6px" width="19" height="18.4" viewBox="0 0 19 18.4"><rect x="8" y="2.2" width="10.4" height="14" fill="#fff" stroke="#2b579a" stroke-width="0.8"/><path d="M10.5 5h6M10.5 7.5h6M10.5 10h6M10.5 12.5h6" stroke="#2b579a" stroke-width="0.8"/><path d="M0.2 1.8 L11 0 V18.4 L0.2 16.6 Z" fill="#2b579a"/><text x="1.2" y="12.6" font-family="Liberation Sans" font-weight="bold" font-size="8" fill="#fff">W</text></svg>
<svg style="left:237.4px;top:455.6px" width="19.6" height="18.4" viewBox="0 0 19.6 18.4"><rect x="8" y="2.2" width="11" height="14" fill="#fff" stroke="#217346" stroke-width="0.8"/><path d="M10.5 5h6.5M10.5 7.5h6.5M10.5 10h6.5M10.5 12.5h6.5M14 3v12" stroke="#217346" stroke-width="0.8"/><path d="M0.2 1.8 L11 0 V18.4 L0.2 16.6 Z" fill="#217346"/><text x="2.2" y="12.6" font-family="Liberation Sans" font-weight="bold" font-size="8.2" fill="#fff">X</text></svg>
<svg style="left:276.3px;top:455.5px" width="20" height="18.5" viewBox="0 0 20 18.5"><path d="M1 3 H7 L8.5 1.5 H18.5 V15 H1 Z" fill="#f5cf6a"/><rect x="1" y="4" width="18" height="9" fill="#fbe39a"/><path d="M3.5 2 h2 M9 1 h2" stroke="#e04a32" stroke-width="1"/><path d="M3 11.2 H17 V17.5 H3 Z" fill="#5ea5e0"/><rect x="6" y="11.2" width="8" height="3" fill="#c8e2f8"/><path d="M1 6 Q10 4.5 19 6 V8 Q10 6.5 1 8 Z" fill="#f0c050"/></svg>
<div style="left:713.8px;top:457.4px;line-height:12px;font-size:8.3px;color:#fff;white-space:pre;transform:scaleX(0.743);transform-origin:0 50%;">ES</div>
<svg style="left:733.4px;top:463.4px" width="4.4" height="2.8" viewBox="0 0 4.4 2.8"><path d="M0 2.8 L2.2 0 L4.4 2.8 Z" fill="#fff"/></svg>
<svg style="left:745px;top:457.6px" width="10" height="11" viewBox="0 0 10 11"><path d="M1 0.5 V10.5" stroke="#eee" stroke-width="1.2"/><path d="M1.6 1 H5.5 L6.2 2 H9.6 V6.2 H6 L5.3 5.2 H1.6 Z" fill="#fff" stroke="#999" stroke-width="0.4"/></svg>
<svg style="left:760px;top:457.5px" width="10" height="11" viewBox="0 0 10 11"><rect x="1.8" y="1" width="7.6" height="6" fill="#6d7f90" stroke="#eee" stroke-width="0.8"/><rect x="0.4" y="3" width="5" height="5" fill="#dfe7ee" stroke="#555" stroke-width="0.5"/><path d="M3 8 V10.5 M0.5 10.5 h9" stroke="#eee" stroke-width="0.9"/></svg>
<svg style="left:775px;top:457.6px" width="10.5" height="11" viewBox="0 0 10.5 11"><path d="M0.5 3.5 H2.5 L5.5 0.8 V10 L2.5 7.3 H0.5 Z" fill="#e8e8e8" stroke="#888" stroke-width="0.5"/><circle cx="7.3" cy="7.6" r="3" fill="#d32f2f" stroke="#fff" stroke-width="0.5"/><path d="M6.1 6.4 L8.5 8.8 M8.5 6.4 L6.1 8.8" stroke="#fff" stroke-width="0.8"/></svg>
<div style="left:805.5px;top:454.2px;line-height:12px;font-size:8.3px;color:#fff;white-space:pre;transform:scaleX(0.824);transform-origin:0 50%;">14:15</div>
<div style="left:795.8px;top:464.4px;line-height:12px;font-size:8.3px;color:#fff;white-space:pre;transform:scaleX(0.860);transform-origin:0 50%;">22/10/2018</div>
</body></html>
